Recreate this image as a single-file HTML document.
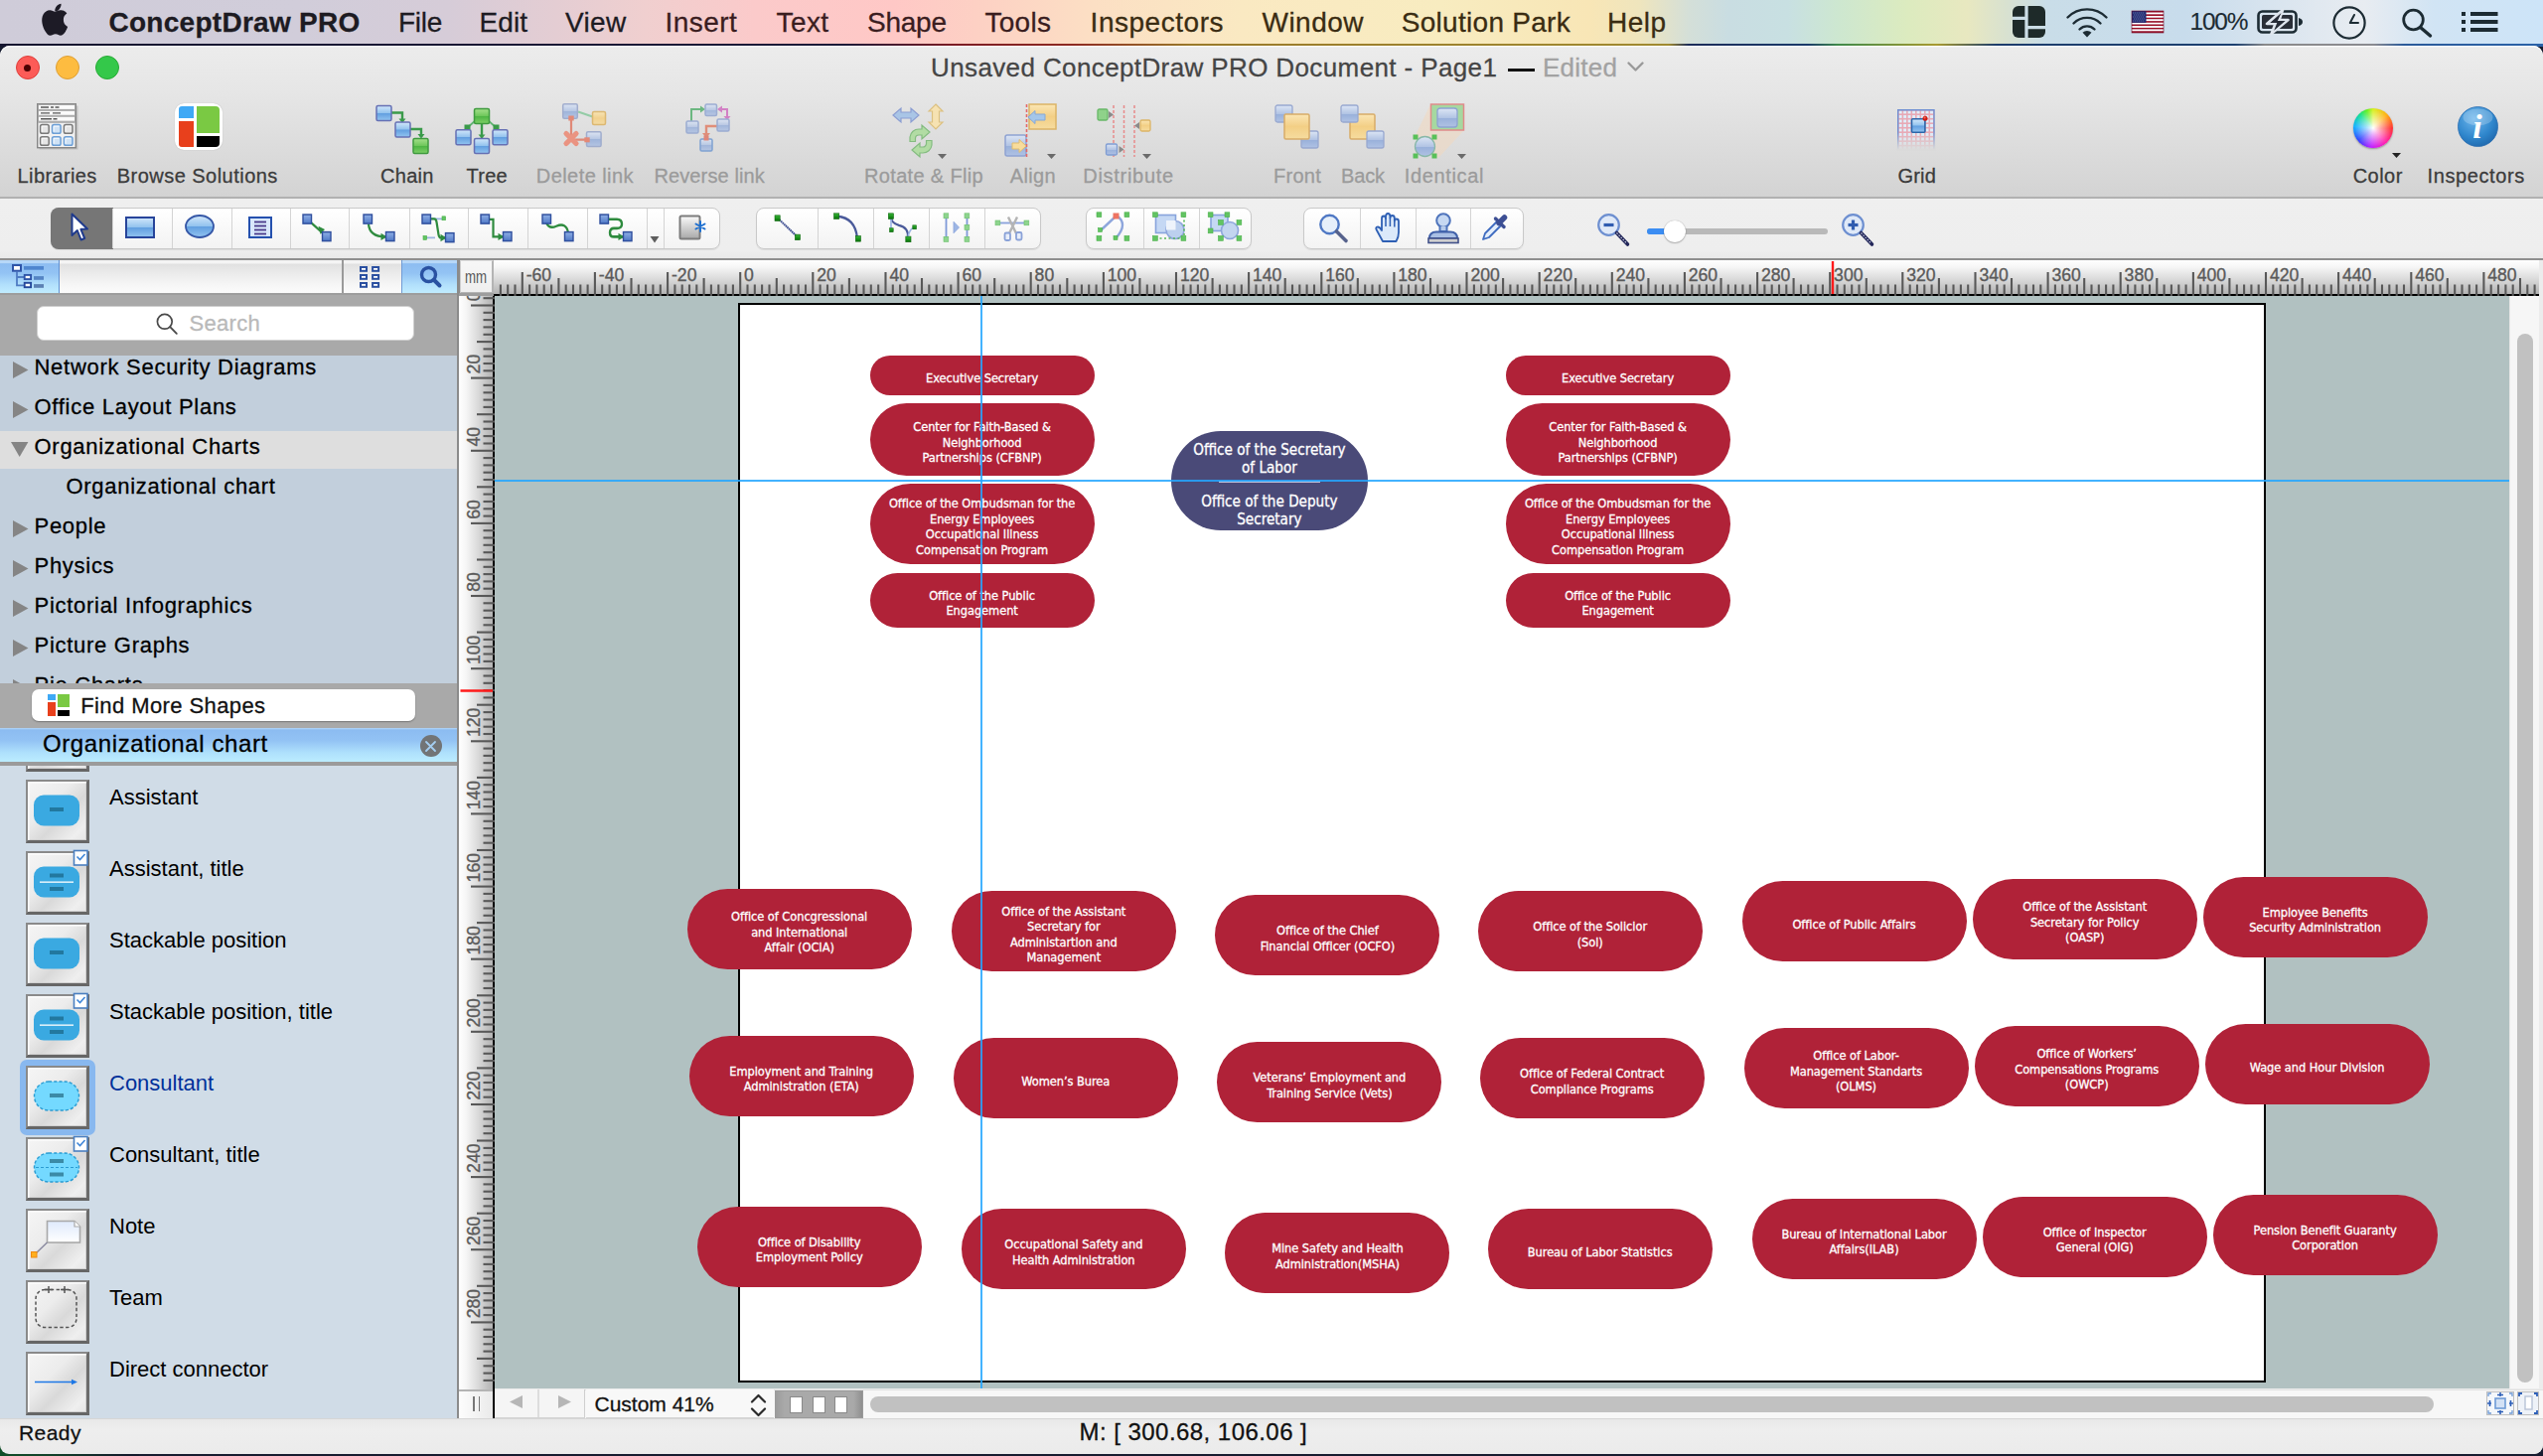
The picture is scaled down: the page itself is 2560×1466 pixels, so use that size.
<!DOCTYPE html>
<html lang="en"><head><meta charset="utf-8"><title>ConceptDraw PRO</title>
<style>
html,body{margin:0;padding:0}
body{width:2560px;height:1466px;overflow:hidden;background:#171c30;font-family:"Liberation Sans",sans-serif;position:relative}
.t{position:absolute;white-space:nowrap}
div{box-sizing:border-box}
svg{position:absolute;overflow:visible}
#win{position:absolute;left:0;top:46px;width:2560px;height:1417.700px;border-radius:10px 10px 9px 9px;overflow:hidden;background:#ececec}
.seg{position:absolute;top:209px;height:42px;border-radius:8px;background:linear-gradient(#ffffff,#f3f3f3);border:1px solid #c9c9c9;box-shadow:0 1px 1px rgba(0,0,0,.08)}
.seg i{position:absolute;top:0;bottom:0;width:1px;background:#d4d4d4}
.ib{position:absolute;left:26px;width:64px;height:64px;border:2.500px solid #8a8a8a;border-right:3px solid #6c6c6c;border-bottom:3px solid #666;background:linear-gradient(135deg,#f5f5f5 0%,#ececec 38%,#d9d9d9 60%,#efefef 86%,#e6e6e6 100%);box-shadow:inset 1.500px 1.500px 0 #fdfdfd,inset -1px -1px 0 #cfcfcf}
.sh{position:absolute;background:#b02238;color:#fff;display:flex;align-items:center;justify-content:center;text-align:center;font-family:"DejaVu Sans Condensed","DejaVu Sans",sans-serif;font-size:12.7px;line-height:15.5px;letter-spacing:-0.05px;width:226px;-webkit-text-stroke:.3px #fff;padding-top:5.500px}
</style></head>
<body>
<div style="position:absolute;left:0px;top:0px;width:2560px;height:44px;background:linear-gradient(90deg,#cfccd9 0px,#d1cdda 300px,#d6ccd8 450px,#e4cdd3 560px,#f0cfcf 650px,#fbcaca 760px,#ffc8c6 900px,#fdd0c4 980px,#fcdfc4 1100px,#fae9c2 1250px,#f8ecc0 1450px,#f8e6b6 1600px,#efe5bd 1650px,#d4dfd8 1700px,#c9dde2 1740px,#c8e0e2 1800px,#cde7d0 1850px,#dcebbf 1920px,#e8e8c0 1980px,#d8e1d0 2020px,#c9dde8 2060px,#c8dcec 2200px,#e0e8f0 2330px,#e8ecf1 2380px,#d1e4f4 2450px,#cde4f8 2560px);"></div>
<div style="position:absolute;left:0px;top:44px;width:2560px;height:3px;background:linear-gradient(90deg,#15152f 0px,#1b1a38 850px,#7c1c24 960px,#8e2a22 1080px,#9a7a2a 1200px,#a08a30 1680px,#1c2c5a 1700px,#1a3a6a 1820px,#3f8a4a 1850px,#a89a30 1950px,#1c3c6c 2010px,#1c4070 2250px,#8a8a8a 2280px,#8a8a90 2390px,#2a5a9a 2420px,#2a62a8 2560px);"></div>
<svg style="left:40.100px;top:.200px" width="29.500" height="36.600" viewBox="0 0 170 200" preserveAspectRatio="none"><path fill="#1d1b26" d="M150.4 172.3c-7.6 11.3-15.6 22.5-28.3 22.700-12.400.2-16.400-7.300-30.500-7.300-14.2 0-18.6 7.100-30.3 7.600-12.200.5-21.500-12.100-29.200-23.300C16.4 149.2 4.4 107.5 20.6 79.300c8-14 22.400-22.8 37.900-23.1 11.800-.2 23 8 30.3 8 7.2 0 20.800-9.9 35.100-8.4 6 .2 22.8 2.4 33.6 18.200-.9.600-20.1 11.700-19.8 35 .2 27.8 24.4 37.1 24.7 37.200-.2.600-3.9 13.200-12 25.100zM97.6 34.500C104.1 26.7 115 20.8 124 20.400c1.2 10.500-3.1 21.100-9.3 28.600-6.3 7.600-16.5 13.500-26.6 12.700-1.300-10.3 3.700-21 9.500-27.200z"/></svg>
<div class="t" style="left:109.5px;top:4.60px;font-size:28px;line-height:36.4px;color:#1d1b22;letter-spacing:0.271px;-webkit-text-stroke:0.28px #1d1b22;font-weight:bold;">ConceptDraw PRO</div>
<div class="t" style="left:401px;top:4.60px;font-size:28px;line-height:36.4px;color:#1d1b22;letter-spacing:-0.28px;-webkit-text-stroke:0.28px #1d1b22;">File</div>
<div class="t" style="left:482.6px;top:4.60px;font-size:28px;line-height:36.4px;color:#1d1b22;letter-spacing:0.038px;-webkit-text-stroke:0.28px #1d1b22;">Edit</div>
<div class="t" style="left:569px;top:4.60px;font-size:28px;line-height:36.4px;color:#1d1b22;letter-spacing:0.353px;-webkit-text-stroke:0.28px #1d1b22;">View</div>
<div class="t" style="left:669.4px;top:4.60px;font-size:28px;line-height:36.4px;color:#3a1d1f;letter-spacing:0.495px;-webkit-text-stroke:0.28px #3a1d1f;">Insert</div>
<div class="t" style="left:781.6px;top:4.60px;font-size:28px;line-height:36.4px;color:#3a1d1f;letter-spacing:0.362px;-webkit-text-stroke:0.28px #3a1d1f;">Text</div>
<div class="t" style="left:873px;top:4.60px;font-size:28px;line-height:36.4px;color:#3a1d1f;letter-spacing:-0.254px;-webkit-text-stroke:0.28px #3a1d1f;">Shape</div>
<div class="t" style="left:991.4px;top:4.60px;font-size:28px;line-height:36.4px;color:#3a1d1f;letter-spacing:0.327px;-webkit-text-stroke:0.28px #3a1d1f;">Tools</div>
<div class="t" style="left:1097.6px;top:4.60px;font-size:28px;line-height:36.4px;color:#3a2c12;letter-spacing:0.523px;-webkit-text-stroke:0.28px #3a2c12;">Inspectors</div>
<div class="t" style="left:1270.5px;top:4.60px;font-size:28px;line-height:36.4px;color:#3a2c12;letter-spacing:0.485px;-webkit-text-stroke:0.28px #3a2c12;">Window</div>
<div class="t" style="left:1410.8px;top:4.60px;font-size:28px;line-height:36.4px;color:#3a2c12;letter-spacing:0.281px;-webkit-text-stroke:0.28px #3a2c12;">Solution Park</div>
<div class="t" style="left:1618px;top:4.60px;font-size:28px;line-height:36.4px;color:#3a2c12;letter-spacing:0.503px;-webkit-text-stroke:0.28px #3a2c12;">Help</div>
<svg style="left:2025.500px;top:5.500px" width="33" height="32" viewBox="0 0 33 32"><rect x="0" y="0" width="33" height="32" rx="6" fill="#1e2a29"/><path d="M14 0V32M0 12.300H14M14 21.700H33" stroke="#cbdde6" stroke-width="3.300"/></svg>
<svg style="left:2079px;top:6px" width="44" height="32" viewBox="0 0 44 32"><g fill="none" stroke="#1c2b33" stroke-width="2.400" stroke-linecap="round"><path d="M2.5 11.5 A27.5 27.5 0 0 1 41.5 11.500"/><path d="M8.5 17.5 A19 19 0 0 1 35.5 17.500"/><path d="M14.5 23.5 A10.6 10.6 0 0 1 29.5 23.500"/></g><path fill="#1c2b33" d="M22 31.5 L17.5 26.8 A6.4 6.4 0 0 1 26.5 26.8 Z"/></svg>
<svg style="left:2146px;top:11px" width="32" height="22" viewBox="0 0 32 22"><rect x="0" y="0.00" width="32" height="1.69" fill="#9c0e24"/><rect x="0" y="1.69" width="32" height="1.69" fill="#fff"/><rect x="0" y="3.38" width="32" height="1.69" fill="#9c0e24"/><rect x="0" y="5.08" width="32" height="1.69" fill="#fff"/><rect x="0" y="6.77" width="32" height="1.69" fill="#9c0e24"/><rect x="0" y="8.46" width="32" height="1.69" fill="#fff"/><rect x="0" y="10.15" width="32" height="1.69" fill="#9c0e24"/><rect x="0" y="11.85" width="32" height="1.69" fill="#fff"/><rect x="0" y="13.54" width="32" height="1.69" fill="#9c0e24"/><rect x="0" y="15.23" width="32" height="1.69" fill="#fff"/><rect x="0" y="16.92" width="32" height="1.69" fill="#9c0e24"/><rect x="0" y="18.62" width="32" height="1.69" fill="#fff"/><rect x="0" y="20.31" width="32" height="1.69" fill="#9c0e24"/><rect x="0" y="0" width="14.500" height="11.850" fill="#1f2a72"/><path d="M1.500 2H13.500M2.500 4H13M1.500 6H13.500M2.500 8H13M1.500 10H13.500" stroke="#e8eaf8" stroke-width=".700" stroke-dasharray=".700 1.300"/><rect x="0" y="0" width="32" height="22" fill="none" stroke="#701028" stroke-width="0.6"/></svg>
<div class="t" style="left:2204.5px;top:6.29px;font-size:24.4px;line-height:31.72px;color:#1c2b33;letter-spacing:-1.152px;-webkit-text-stroke:0.15px #1c2b33;">100%</div>
<svg style="left:2272px;top:10px" width="47" height="24" viewBox="0 0 47 24"><rect x="1.500" y="1.500" width="38" height="21" rx="4" fill="none" stroke="#1c2b33" stroke-width="2.600"/><rect x="5" y="5" width="31" height="14" rx="1.500" fill="#2a2f38"/><path d="M42 8 q4 1 4 4 q0 3 -4 4 z" fill="#1c2b33"/><path d="M26 0 L10 14 H18.500 L14.500 24 L31.500 10 H22.500 Z" fill="#dfe6ee" stroke="#dfe6ee" stroke-width="2.600" stroke-linejoin="round"/><path d="M24.500 3 L13.200 13 H20.300 L17.200 20.800 L28.600 11 H20.800 Z" fill="#262b36"/></svg>
<svg style="left:2348px;top:6px" width="34" height="34" viewBox="0 0 34 34"><circle cx="17" cy="17" r="15.600" fill="none" stroke="#1c2b33" stroke-width="2.200"/><path d="M22 9 L17.8 17 H26" fill="none" stroke="#1c2b33" stroke-width="2" stroke-linejoin="round" stroke-linecap="round"/></svg>
<svg style="left:2417px;top:8px" width="32" height="30" viewBox="0 0 32 30"><circle cx="12.500" cy="12" r="9.800" fill="none" stroke="#1c2b33" stroke-width="2.800"/><path d="M19.5 19.5 L29.5 28" stroke="#1c2b33" stroke-width="3.400" stroke-linecap="round"/></svg>
<svg style="left:2477.500px;top:12px" width="37" height="20" viewBox="0 0 37 20"><rect x="0" y="0" width="4" height="4" fill="#1c2b33"/><rect x="9" y="0" width="27.500" height="4" fill="#1c2b33"/><rect x="0" y="8" width="4" height="4" fill="#1c2b33"/><rect x="9" y="8" width="27.500" height="4" fill="#1c2b33"/><rect x="0" y="16" width="4" height="4" fill="#1c2b33"/><rect x="9" y="16" width="27.500" height="4" fill="#1c2b33"/></svg>
<div id="win"></div>
<div style="position:absolute;left:0px;top:46px;width:2560px;height:153px;background:linear-gradient(#ececec 0%,#e6e6e6 30%,#d3d3d3 100%);border-radius:10px 10px 0 0;box-shadow:inset 0 1.200px 0 rgba(255,255,255,.85);"></div>
<div style="position:absolute;left:0px;top:198px;width:2560px;height:2px;background:#b1b1b1;"></div>
<div style="position:absolute;left:15.7px;top:56px;width:24px;height:24px;border-radius:50%;background:#fc5b57;border:1px solid #df3e3a;"></div>
<div style="position:absolute;left:56px;top:56px;width:24px;height:24px;border-radius:50%;background:#fdbc40;border:1px solid #de9f34;"></div>
<div style="position:absolute;left:95.7px;top:56px;width:24px;height:24px;border-radius:50%;background:#34c84a;border:1px solid #27aa35;"></div>
<div style="position:absolute;left:24.2px;top:64.5px;width:7px;height:7px;border-radius:50%;background:#4c0102;"></div>
<div class="t" style="left:937px;top:52.49px;font-size:26px;line-height:33.8px;color:#454545;letter-spacing:0.384px;-webkit-text-stroke:0.28px #454545;">Unsaved ConceptDraw PRO Document - Page1</div>
<div style="position:absolute;left:1518px;top:69.3px;width:27px;height:2.6px;background:#111;"></div>
<div class="t" style="left:1553px;top:52.49px;font-size:26px;line-height:33.8px;color:#a2a2a2;letter-spacing:0.263px;-webkit-text-stroke:0.28px #a2a2a2;">Edited</div>
<svg style="left:1638px;top:62px" width="17" height="11" viewBox="0 0 17 11"><path d="M1.500 1.500 L8.500 8.500 L15.500 1.500" fill="none" stroke="#9a9a9a" stroke-width="2.400" stroke-linecap="round" stroke-linejoin="round"/></svg>
<div class="t" style="left:17.6px;top:164.07px;font-size:20px;line-height:26.0px;color:#3b3b3b;letter-spacing:0.366px;-webkit-text-stroke:0.28px #3b3b3b;">Libraries</div>
<div class="t" style="left:117.8px;top:164.07px;font-size:20px;line-height:26.0px;color:#3b3b3b;letter-spacing:0.467px;-webkit-text-stroke:0.28px #3b3b3b;">Browse Solutions</div>
<div class="t" style="left:383px;top:164.07px;font-size:20px;line-height:26.0px;color:#3b3b3b;letter-spacing:0.288px;-webkit-text-stroke:0.28px #3b3b3b;">Chain</div>
<div class="t" style="left:469.4px;top:164.07px;font-size:20px;line-height:26.0px;color:#3b3b3b;letter-spacing:0.304px;-webkit-text-stroke:0.28px #3b3b3b;">Tree</div>
<div class="t" style="left:539.8px;top:164.07px;font-size:20px;line-height:26.0px;color:#9b9b9b;letter-spacing:0.438px;-webkit-text-stroke:0.28px #9b9b9b;">Delete link</div>
<div class="t" style="left:658.4px;top:164.07px;font-size:20px;line-height:26.0px;color:#9b9b9b;letter-spacing:0.13px;-webkit-text-stroke:0.28px #9b9b9b;">Reverse link</div>
<div class="t" style="left:870px;top:164.07px;font-size:20px;line-height:26.0px;color:#9b9b9b;letter-spacing:0.338px;-webkit-text-stroke:0.28px #9b9b9b;">Rotate &amp; Flip</div>
<div class="t" style="left:1016.7px;top:164.07px;font-size:20px;line-height:26.0px;color:#9b9b9b;letter-spacing:0.365px;-webkit-text-stroke:0.28px #9b9b9b;">Align</div>
<div class="t" style="left:1090.3px;top:164.07px;font-size:20px;line-height:26.0px;color:#9b9b9b;letter-spacing:0.703px;-webkit-text-stroke:0.28px #9b9b9b;">Distribute</div>
<div class="t" style="left:1282px;top:164.07px;font-size:20px;line-height:26.0px;color:#9b9b9b;letter-spacing:0.264px;-webkit-text-stroke:0.28px #9b9b9b;">Front</div>
<div class="t" style="left:1350px;top:164.07px;font-size:20px;line-height:26.0px;color:#9b9b9b;letter-spacing:-0.116px;-webkit-text-stroke:0.28px #9b9b9b;">Back</div>
<div class="t" style="left:1413.8px;top:164.07px;font-size:20px;line-height:26.0px;color:#9b9b9b;letter-spacing:0.634px;-webkit-text-stroke:0.28px #9b9b9b;">Identical</div>
<div class="t" style="left:1910.4px;top:164.07px;font-size:20px;line-height:26.0px;color:#3b3b3b;letter-spacing:0.204px;-webkit-text-stroke:0.28px #3b3b3b;">Grid</div>
<div class="t" style="left:2368.7px;top:164.07px;font-size:20px;line-height:26.0px;color:#3b3b3b;letter-spacing:0.461px;-webkit-text-stroke:0.28px #3b3b3b;">Color</div>
<div class="t" style="left:2443.5px;top:164.07px;font-size:20px;line-height:26.0px;color:#3b3b3b;letter-spacing:0.603px;-webkit-text-stroke:0.28px #3b3b3b;">Inspectors</div>
<svg width="0" height="0" style="left:0;top:0"><defs>
<linearGradient id="gB" x1="0" y1="0" x2="0" y2="1"><stop offset="0" stop-color="#d3e8fb"/><stop offset=".48" stop-color="#93c3ee"/><stop offset=".52" stop-color="#629fe0"/><stop offset="1" stop-color="#93c4f0"/></linearGradient>
<linearGradient id="gG" x1="0" y1="0" x2="0" y2="1"><stop offset="0" stop-color="#a6e08c"/><stop offset=".5" stop-color="#6cc659"/><stop offset=".52" stop-color="#4db543"/><stop offset="1" stop-color="#7fd068"/></linearGradient>
<linearGradient id="gY" x1="0" y1="0" x2="0" y2="1"><stop offset="0" stop-color="#fbe6b4"/><stop offset=".5" stop-color="#f3cf85"/><stop offset="1" stop-color="#f6dc9f"/></linearGradient>
<linearGradient id="gS" x1="0" y1="0" x2="0" y2="1"><stop offset="0" stop-color="#dde6f5"/><stop offset=".5" stop-color="#b2c4e4"/><stop offset=".52" stop-color="#98b0da"/><stop offset="1" stop-color="#b0c2e4"/></linearGradient>
<radialGradient id="gInfo" cx=".4" cy=".3" r=".8"><stop offset="0" stop-color="#6db6ec"/><stop offset=".6" stop-color="#2f86cc"/><stop offset="1" stop-color="#1c62a6"/></radialGradient>
</defs></svg>
<svg style="left:37.300px;top:104.400px" width="42" height="47" viewBox="0 0 42 47"><rect x="2.500" y="2.500" width="39" height="44" fill="#8a8a8a" opacity=".35"/><rect x=".700" y=".700" width="38.600" height="44" fill="#f1f1f1" stroke="#868686" stroke-width="1.400"/><rect x="1.400" y="1.4" width="37.200" height="5" fill="#fbfbfb" stroke="#a2a2a2" stroke-width="1"/><path d="M4 4.0h8m2 0h3m1.500 0h4" stroke="#555" stroke-width="1.400"/><rect x="1.400" y="7.3" width="37.200" height="5" fill="#fbfbfb" stroke="#a2a2a2" stroke-width="1"/><path d="M4 9.9h9m3 0h8" stroke="#555" stroke-width="1.400"/><rect x="1.400" y="13.2" width="37.200" height="5" fill="#fbfbfb" stroke="#a2a2a2" stroke-width="1"/><path d="M4 15.799999999999999h11m1.500 0h4" stroke="#555" stroke-width="1.400"/><path d="M1.400 19.200H38.600" stroke="#9a9a9a" stroke-width="1"/><rect x="3.6" y="21.6" width="8.600" height="8.600" rx="1.800" fill="#e6e6e6" stroke="#7a7a7a" stroke-width="1.500"/><path d="M5.2 28.6v-5.400h5.400" fill="none" stroke="#fff" stroke-width="1" opacity=".8"/><rect x="15.5" y="21.6" width="8.600" height="8.600" rx="1.800" fill="#cfe2f5" stroke="#6c9fd6" stroke-width="1.500"/><path d="M17.1 28.6v-5.400h5.400" fill="none" stroke="#fff" stroke-width="1" opacity=".8"/><rect x="27.4" y="21.6" width="8.600" height="8.600" rx="1.800" fill="#e6e6e6" stroke="#7a7a7a" stroke-width="1.500"/><path d="M29.0 28.6v-5.400h5.400" fill="none" stroke="#fff" stroke-width="1" opacity=".8"/><rect x="3.6" y="33.7" width="8.600" height="8.600" rx="1.800" fill="#e6e6e6" stroke="#7a7a7a" stroke-width="1.500"/><path d="M5.2 40.7v-5.400h5.400" fill="none" stroke="#fff" stroke-width="1" opacity=".8"/><rect x="15.5" y="33.7" width="8.600" height="8.600" rx="1.800" fill="#cfe2f5" stroke="#6c9fd6" stroke-width="1.500"/><path d="M17.1 40.7v-5.400h5.400" fill="none" stroke="#fff" stroke-width="1" opacity=".8"/><rect x="27.4" y="33.7" width="8.600" height="8.600" rx="1.800" fill="#cfe2f5" stroke="#6c9fd6" stroke-width="1.500"/><path d="M29.0 40.7v-5.400h5.400" fill="none" stroke="#fff" stroke-width="1" opacity=".8"/></svg>
<div style="position:absolute;left:176px;top:104px;width:48px;height:47px;background:#fff;border-radius:9px;box-shadow:0 0 1px rgba(0,0,0,.25);"></div>
<div style="position:absolute;left:179.5px;top:107.2px;width:15px;height:11.4px;background:#3fa9f5;border-radius:3px 0 0 0;"></div>
<div style="position:absolute;left:179.5px;top:121.8px;width:15px;height:26px;background:#e8401c;border-radius:0 0 0 3px;"></div>
<div style="position:absolute;left:197.8px;top:107.2px;width:23px;height:26.8px;background:#7ac943;border-radius:0 4px 0 0;"></div>
<div style="position:absolute;left:197.8px;top:137px;width:23px;height:10.8px;background:#000;border-radius:0 0 4px 0;"></div>
<svg style="left:378px;top:105px" width="55" height="51" viewBox="0 0 55 51"><path d="M16 8.500 H27 V17 M35 25 H46 V33" fill="none" stroke="#3a9a4a" stroke-width="2.400"/><path d="M23.500 14.500h7l-3.500 4.500z M42.500 30h7l-3.500 4.500z" fill="#3a9a4a"/><rect x="1" y="1.5" width="15" height="15" rx="1.5" fill="url(#gB)" stroke="#6670b4" stroke-width="1.5"/><rect x="20" y="18" width="15" height="15" rx="1.5" fill="url(#gB)" stroke="#6670b4" stroke-width="1.5"/><rect x="38" y="34.5" width="15" height="15" rx="1.5" fill="url(#gG)" stroke="#3f9a3f" stroke-width="1.5"/></svg>
<svg style="left:458px;top:108px" width="55" height="48" viewBox="0 0 55 48"><path d="M27 16 V32" fill="none" stroke="#3a9a4a" stroke-width="2.400"/><path d="M21 13 L12 21 M33 13 L42 21" fill="none" stroke="#62b474" stroke-width="1.800"/><path d="M23.500 27.500h7l-3.500 4z" fill="#3a9a4a"/><rect x="9.500" y="17.500" width="6" height="5" fill="#3a9a4a"/><rect x="38.500" y="17.500" width="6" height="5" fill="#3a9a4a"/><rect x="19.5" y="1.5" width="15" height="15" rx="1.5" fill="url(#gG)" stroke="#3f9a3f" stroke-width="1.5"/><rect x="1" y="22.7" width="15" height="15" rx="1.5" fill="url(#gB)" stroke="#6670b4" stroke-width="1.5"/><rect x="19.5" y="31.5" width="15" height="15" rx="1.5" fill="url(#gB)" stroke="#6670b4" stroke-width="1.5"/><rect x="38" y="22.7" width="15" height="15" rx="1.5" fill="url(#gB)" stroke="#6670b4" stroke-width="1.5"/></svg>
<svg style="left:566px;top:104px;opacity:.9" width="46" height="50" viewBox="0 0 46 50"><path d="M16 8.500 L30.500 13.500" stroke="#8ccaa0" stroke-width="2"/><path d="M9 15 V33 M11 36.700 H27" fill="none" stroke="#e0806c" stroke-width="2.200"/><path d="M4 30.500 L14 40.500 M14 30.500 L4 40.500" stroke="#ec8c78" stroke-width="5.200" stroke-linecap="round"/><rect x="0.7" y="0.7" width="14.6" height="14.6" rx="1.5" fill="url(#gS)" stroke="#9aa8cc" stroke-width="1.5"/><rect x="30.5" y="8.5" width="13" height="13" rx="1.5" fill="url(#gY)" stroke="#dcb466" stroke-width="1.5"/><rect x="24.5" y="28.8" width="14.6" height="14.6" rx="1.5" fill="url(#gS)" stroke="#9aa8cc" stroke-width="1.5"/><rect x="6.300" y="12.500" width="5.400" height="5" fill="#e4806c"/><rect x="22.300" y="34.300" width="5.400" height="5" fill="#e4806c"/></svg>
<svg style="left:690px;top:104px;opacity:.85" width="46" height="50" viewBox="0 0 46 50"><path d="M6 18 V6 H17" fill="none" stroke="#58b070" stroke-width="2"/><path d="M15 2.500 L20 6 L15 9.500Z" fill="#58b070"/><path d="M36 6 H42 V14" fill="none" stroke="#d070c0" stroke-width="2"/><path d="M32 6 L37 2.500 V9.500Z M38.500 13 h7 l-3.500 4Z" fill="#d070c0"/><path d="M33 23 H21 V35" fill="none" stroke="#e08068" stroke-width="2.400"/><path d="M17 30 h8 l-4 5Z" fill="#e08068"/><rect x="20" y="1" width="11.5" height="11.5" rx="1.5" fill="url(#gS)" stroke="#90a4d0" stroke-width="1.5"/><rect x="1" y="18" width="12" height="12" rx="1.5" fill="url(#gS)" stroke="#90a4d0" stroke-width="1.5"/><rect x="32" y="16" width="12" height="12" rx="1.5" fill="url(#gS)" stroke="#90a4d0" stroke-width="1.5"/><rect x="15" y="36" width="12" height="12" rx="1.5" fill="url(#gS)" stroke="#6f98d0" stroke-width="1.5"/><rect x="18.500" y="32.500" width="5" height="5" fill="#e07868"/></svg>
<svg style="left:898px;top:104px" width="53" height="56" viewBox="0 0 53 56"><path d="M1 12 L9 5 V9 H19 V5 L27 12 L19 19 V15 H9 V19Z" fill="#a9c5e6" stroke="#8c9ed2" stroke-width="1.200"/><path d="M44 1 L51 8 H47.500 V19 H51 L44 26 L37 19 H40.500 V8 H37Z" fill="#f6e2b2" stroke="#dcc080" stroke-width="1.200"/><path d="M18 34 a9 9 0 0 1 9 -8 h3 v-4 l8 7 -8 7 v-4 h-3 a3.500 3.500 0 0 0 -3.500 3.500 v3 h-5.500z M40 42 a9 9 0 0 1 -9 8 h-3 v4 l-8 -7 8 -7 v4 h3 a3.500 3.500 0 0 0 3.500 -3.500 v-3 h5.500z" fill="#b2dca4" stroke="#84bc80" stroke-width="1.200"/></svg>
<svg style="left:943.5px;top:155px" width="9" height="5" viewBox="0 0 9 5"><path d="M0 0H9L4.500 5Z" fill="#6a6a6a"/></svg>
<svg style="left:1011px;top:104px" width="54" height="55" viewBox="0 0 54 55"><rect x="25" y="1" width="27" height="25" fill="url(#gY)" stroke="#dcb466" stroke-width="1.500"/><rect x="1" y="32" width="21" height="21" rx="2" fill="url(#gS)" stroke="#8ea2d2" stroke-width="1.500"/><path d="M22.500 1 V54" stroke="#e46a6a" stroke-width="1.600" stroke-dasharray="3 2"/><path d="M24 14 L31 7.500 V11 H41 V17 H31 V20.500Z" fill="#a4c6ea" stroke="#86a8d6" stroke-width="1"/><path d="M22 43 L15 36.500 V40 H8 V46 H15 V49.500Z" fill="#f8dc9c" stroke="#e0bc70" stroke-width="1"/></svg>
<svg style="left:1053.5px;top:155px" width="9" height="5" viewBox="0 0 9 5"><path d="M0 0H9L4.500 5Z" fill="#6a6a6a"/></svg>
<svg style="left:1104px;top:104px" width="56" height="55" viewBox="0 0 56 55"><path d="M17 2 V54 M27.500 2 V54 M38 2 V54" stroke="#e88a8a" stroke-width="1.500" stroke-dasharray="3 2"/><rect x="1" y="6" width="10" height="11" rx="1.500" fill="#8fd28a" stroke="#68b868" stroke-width="1.300"/><path d="M12 8 l5 3.500 -5 3.500Z" fill="#8a8a8a"/><rect x="44" y="17" width="10" height="11" rx="1.500" fill="url(#gY)" stroke="#dcb466" stroke-width="1.300"/><path d="M43 19 l-5 3.500 5 3.500Z" fill="#8a8a8a"/><rect x="9.500" y="41" width="11" height="11" rx="1.500" fill="url(#gS)" stroke="#7f9cd2" stroke-width="1.300"/><path d="M22.500 43 l5 3.500 -5 3.500Z" fill="#8a8a8a"/></svg>
<svg style="left:1149.5px;top:155px" width="9" height="5" viewBox="0 0 9 5"><path d="M0 0H9L4.500 5Z" fill="#6a6a6a"/></svg>
<svg style="left:1283px;top:105px" width="46" height="46" viewBox="0 0 46 46"><rect x="1" y="1" width="17" height="17" rx="2" fill="url(#gS)" stroke="#98a8d0" stroke-width="1.3"/><rect x="27" y="27" width="17" height="17" rx="2" fill="url(#gS)" stroke="#98a8d0" stroke-width="1.3"/><rect x="10" y="10" width="25" height="25" rx="1.500" fill="url(#gY)" stroke="#d8ac68" stroke-width="1.500"/></svg>
<svg style="left:1349px;top:105px" width="46" height="46" viewBox="0 0 46 46"><rect x="10" y="10" width="25" height="25" rx="1.500" fill="url(#gY)" stroke="#d8ac68" stroke-width="1.500"/><rect x="1" y="1" width="17" height="17" rx="2" fill="url(#gS)" stroke="#98a8d0" stroke-width="1.3"/><rect x="27" y="27" width="17" height="17" rx="2" fill="url(#gS)" stroke="#98a8d0" stroke-width="1.3"/></svg>
<svg style="left:1422px;top:104px" width="54" height="57" viewBox="0 0 54 57"><path d="M3 32 L18 1 H52 V27 L26 55 Z" fill="#f6d8b8" opacity=".45"/><rect x="18.500" y="1" width="33" height="26" fill="#a6d8a0" stroke="#e08a8a" stroke-width="1.500"/><rect x="25" y="5" width="20" height="19" rx="3" fill="url(#gS)" stroke="#8ea2d2" stroke-width="1.300"/><circle cx="12.500" cy="43.500" r="10" fill="url(#gS)" stroke="#88b8a8" stroke-width="1.300"/><rect x="0.5" y="31.5" width="5" height="5" fill="#58c058"/><rect x="19.5" y="31.5" width="5" height="5" fill="#58c058"/><rect x="0.5" y="50.5" width="5" height="5" fill="#58c058"/><rect x="19.5" y="50.5" width="5" height="5" fill="#58c058"/></svg>
<svg style="left:1467px;top:155px" width="9" height="5" viewBox="0 0 9 5"><path d="M0 0H9L4.500 5Z" fill="#6a6a6a"/></svg>
<svg style="left:1910.400px;top:110px" width="38" height="42" viewBox="0 0 38 42"><defs><linearGradient id="gfade" x1="0" y1="0" x2="0" y2="1"><stop offset="0" stop-color="#dcdcdc" stop-opacity="0"/><stop offset=".55" stop-color="#dcdcdc" stop-opacity="0"/><stop offset=".97" stop-color="#dadada" stop-opacity="1"/></linearGradient></defs><rect x=".500" y=".500" width="36.700" height="40.500" fill="#e8a9b5"/><rect x="1.70" y="1.50" width="2.900" height="2.900" fill="#dfeefa"/><rect x="6.18" y="1.50" width="2.900" height="2.900" fill="#dfeefa"/><rect x="10.66" y="1.50" width="2.900" height="2.900" fill="#dfeefa"/><rect x="15.14" y="1.50" width="2.900" height="2.900" fill="#dfeefa"/><rect x="19.62" y="1.50" width="2.900" height="2.900" fill="#dfeefa"/><rect x="24.10" y="1.50" width="2.900" height="2.900" fill="#dfeefa"/><rect x="28.58" y="1.50" width="2.900" height="2.900" fill="#dfeefa"/><rect x="33.06" y="1.50" width="2.900" height="2.900" fill="#dfeefa"/><rect x="1.70" y="6.00" width="2.900" height="2.900" fill="#dfeefa"/><rect x="6.18" y="6.00" width="2.900" height="2.900" fill="#dfeefa"/><rect x="10.66" y="6.00" width="2.900" height="2.900" fill="#dfeefa"/><rect x="15.14" y="6.00" width="2.900" height="2.900" fill="#dfeefa"/><rect x="19.62" y="6.00" width="2.900" height="2.900" fill="#dfeefa"/><rect x="24.10" y="6.00" width="2.900" height="2.900" fill="#dfeefa"/><rect x="28.58" y="6.00" width="2.900" height="2.900" fill="#dfeefa"/><rect x="33.06" y="6.00" width="2.900" height="2.900" fill="#dfeefa"/><rect x="1.70" y="10.50" width="2.900" height="2.900" fill="#dfeefa"/><rect x="6.18" y="10.50" width="2.900" height="2.900" fill="#dfeefa"/><rect x="10.66" y="10.50" width="2.900" height="2.900" fill="#dfeefa"/><rect x="15.14" y="10.50" width="2.900" height="2.900" fill="#dfeefa"/><rect x="19.62" y="10.50" width="2.900" height="2.900" fill="#dfeefa"/><rect x="24.10" y="10.50" width="2.900" height="2.900" fill="#dfeefa"/><rect x="28.58" y="10.50" width="2.900" height="2.900" fill="#dfeefa"/><rect x="33.06" y="10.50" width="2.900" height="2.900" fill="#dfeefa"/><rect x="1.70" y="15.00" width="2.900" height="2.900" fill="#dfeefa"/><rect x="6.18" y="15.00" width="2.900" height="2.900" fill="#dfeefa"/><rect x="10.66" y="15.00" width="2.900" height="2.900" fill="#dfeefa"/><rect x="15.14" y="15.00" width="2.900" height="2.900" fill="#dfeefa"/><rect x="19.62" y="15.00" width="2.900" height="2.900" fill="#dfeefa"/><rect x="24.10" y="15.00" width="2.900" height="2.900" fill="#dfeefa"/><rect x="28.58" y="15.00" width="2.900" height="2.900" fill="#dfeefa"/><rect x="33.06" y="15.00" width="2.900" height="2.900" fill="#dfeefa"/><rect x="1.70" y="19.50" width="2.900" height="2.900" fill="#dfeefa"/><rect x="6.18" y="19.50" width="2.900" height="2.900" fill="#dfeefa"/><rect x="10.66" y="19.50" width="2.900" height="2.900" fill="#dfeefa"/><rect x="15.14" y="19.50" width="2.900" height="2.900" fill="#dfeefa"/><rect x="19.62" y="19.50" width="2.900" height="2.900" fill="#dfeefa"/><rect x="24.10" y="19.50" width="2.900" height="2.900" fill="#dfeefa"/><rect x="28.58" y="19.50" width="2.900" height="2.900" fill="#dfeefa"/><rect x="33.06" y="19.50" width="2.900" height="2.900" fill="#dfeefa"/><rect x="1.70" y="24.00" width="2.900" height="2.900" fill="#dfeefa"/><rect x="6.18" y="24.00" width="2.900" height="2.900" fill="#dfeefa"/><rect x="10.66" y="24.00" width="2.900" height="2.900" fill="#dfeefa"/><rect x="15.14" y="24.00" width="2.900" height="2.900" fill="#dfeefa"/><rect x="19.62" y="24.00" width="2.900" height="2.900" fill="#dfeefa"/><rect x="24.10" y="24.00" width="2.900" height="2.900" fill="#dfeefa"/><rect x="28.58" y="24.00" width="2.900" height="2.900" fill="#dfeefa"/><rect x="33.06" y="24.00" width="2.900" height="2.900" fill="#dfeefa"/><rect x="1.70" y="28.50" width="2.900" height="2.900" fill="#dfeefa"/><rect x="6.18" y="28.50" width="2.900" height="2.900" fill="#dfeefa"/><rect x="10.66" y="28.50" width="2.900" height="2.900" fill="#dfeefa"/><rect x="15.14" y="28.50" width="2.900" height="2.900" fill="#dfeefa"/><rect x="19.62" y="28.50" width="2.900" height="2.900" fill="#dfeefa"/><rect x="24.10" y="28.50" width="2.900" height="2.900" fill="#dfeefa"/><rect x="28.58" y="28.50" width="2.900" height="2.900" fill="#dfeefa"/><rect x="33.06" y="28.50" width="2.900" height="2.900" fill="#dfeefa"/><rect x="1.70" y="33.00" width="2.900" height="2.900" fill="#dfeefa"/><rect x="6.18" y="33.00" width="2.900" height="2.900" fill="#dfeefa"/><rect x="10.66" y="33.00" width="2.900" height="2.900" fill="#dfeefa"/><rect x="15.14" y="33.00" width="2.900" height="2.900" fill="#dfeefa"/><rect x="19.62" y="33.00" width="2.900" height="2.900" fill="#dfeefa"/><rect x="24.10" y="33.00" width="2.900" height="2.900" fill="#dfeefa"/><rect x="28.58" y="33.00" width="2.900" height="2.900" fill="#dfeefa"/><rect x="33.06" y="33.00" width="2.900" height="2.900" fill="#dfeefa"/><rect x="1.70" y="37.50" width="2.900" height="2.900" fill="#dfeefa"/><rect x="6.18" y="37.50" width="2.900" height="2.900" fill="#dfeefa"/><rect x="10.66" y="37.50" width="2.900" height="2.900" fill="#dfeefa"/><rect x="15.14" y="37.50" width="2.900" height="2.900" fill="#dfeefa"/><rect x="19.62" y="37.50" width="2.900" height="2.900" fill="#dfeefa"/><rect x="24.10" y="37.50" width="2.900" height="2.900" fill="#dfeefa"/><rect x="28.58" y="37.50" width="2.900" height="2.900" fill="#dfeefa"/><rect x="33.06" y="37.50" width="2.900" height="2.900" fill="#dfeefa"/><path d="M.700 41 V.700 H37 V41" fill="none" stroke="#6f8fd2" stroke-width="1.400"/><rect x="-1" y="0" width="40" height="42" fill="url(#gfade)"/><rect x="14.500" y="9.800" width="13.400" height="13.400" rx="1" fill="url(#gB)" stroke="#2c66aa" stroke-width="1.600"/><circle cx="28" cy="9.200" r="2.500" fill="#d21a12"/><circle cx="27.600" cy="8.600" r="1" fill="#f0705c"/></svg>
<div style="position:absolute;left:2368.7px;top:109px;width:40.3px;height:40.3px;border-radius:50%;background:radial-gradient(circle,#fff 0%,rgba(255,255,255,.6) 25%,rgba(255,255,255,0) 68%),conic-gradient(from 0deg,#d8f020,#ffb010 45deg,#ff3030 90deg,#ff20b0 140deg,#c020ff 185deg,#3040ff 230deg,#10b0ff 275deg,#10e090 315deg,#60f020 340deg,#d8f020 360deg);box-shadow:0 1px 2px rgba(0,0,0,.35);"></div>
<svg style="left:2407.5px;top:154px" width="9" height="5" viewBox="0 0 9 5"><path d="M0 0H9L4.500 5Z" fill="#222"/></svg>
<svg style="left:2474px;top:107px" width="41" height="41" viewBox="0 0 41 41"><circle cx="20.500" cy="20.500" r="20" fill="url(#gInfo)" stroke="#2a6cb0" stroke-width=".8"/><ellipse cx="20.500" cy="11" rx="15" ry="8.500" fill="#fff" opacity=".22"/><text x="20" y="32" font-family="Liberation Serif, serif" font-style="italic" font-weight="bold" font-size="34" fill="#fff" text-anchor="middle">i</text></svg>
<div style="position:absolute;left:0px;top:200px;width:2560px;height:60px;background:linear-gradient(#efefef,#eeeeee 88%,#e9e9e9);"></div>
<div style="position:absolute;left:0px;top:260px;width:2560px;height:2px;background:#8f8f8f;"></div>
<div class="seg" style="left:51px;width:673.5px"><b style="position:absolute;left:-1px;top:-1px;bottom:-1px;width:63.0px;background:#767676;border-radius:8px 0 0 8px"></b><i style="left:61.0px"></i><i style="left:121.0px"></i><i style="left:180.8px"></i><i style="left:239.5px"></i><i style="left:299.0px"></i><i style="left:359.5px"></i><i style="left:419.0px"></i><i style="left:479.0px"></i><i style="left:539.3px"></i><i style="left:598.6px"></i><i style="left:615.5px"></i></div>
<div class="seg" style="left:761.4px;width:286.9px"><i style="left:60.6px"></i><i style="left:116.8px"></i><i style="left:172.6px"></i><i style="left:228.2px"></i></div>
<div class="seg" style="left:1093.2px;width:167.1px"><i style="left:56.6px"></i><i style="left:112.6px"></i></div>
<div class="seg" style="left:1311.8px;width:222.7px"><i style="left:56.0px"></i><i style="left:112.2px"></i><i style="left:167.7px"></i></div>
<svg width="0" height="0" style="left:0;top:0"><defs><linearGradient id="gDG" x1="0" y1="0" x2="0" y2="1"><stop offset="0" stop-color="#3cb43c"/><stop offset=".5" stop-color="#1c961c"/><stop offset="1" stop-color="#0b6e0b"/></linearGradient><linearGradient id="gHB" x1="0" y1="0" x2="0" y2="1"><stop offset="0" stop-color="#8fb0e6"/><stop offset="1" stop-color="#4f78c6"/></linearGradient></defs></svg>
<svg style="left:71.0px;top:213.5px" width="18" height="30" viewBox="0 0 18 30"><path d="M1.500 1.500 V23 L6.800 18 L10.600 27.500 L14.200 26 L10.400 16.800 L17 16.500 Z" fill="#fff" stroke="#1f3a8c" stroke-width="2" stroke-linejoin="round"/></svg>
<svg style="left:126.0px;top:218.0px" width="30" height="22" viewBox="0 0 30 22"><rect x="1" y="1" width="28" height="20" fill="url(#gB)" stroke="#27449a" stroke-width="2"/></svg>
<svg style="left:186.0px;top:216.0px" width="30" height="24" viewBox="0 0 30 24"><ellipse cx="15" cy="12" rx="14" ry="11" fill="url(#gB)" stroke="#3456a6" stroke-width="1.800"/></svg>
<svg style="left:250.0px;top:218.0px" width="24" height="22" viewBox="0 0 24 22"><rect x="1" y="1" width="22" height="20" fill="#d9e8fb" stroke="#2450ae" stroke-width="2"/><rect x="6" y="4.6" width="12" height="1.800" fill="#4a3a8a"/><rect x="6" y="8.6" width="12" height="1.800" fill="#4a3a8a"/><rect x="6" y="12.6" width="12" height="1.800" fill="#4a3a8a"/><rect x="6" y="16.6" width="12" height="1.800" fill="#4a3a8a"/></svg>
<svg style="left:304.0px;top:214.7px" width="30" height="28.7" viewBox="0 0 30 27" preserveAspectRatio="none"><path d="M6 6 L25 22" stroke="#2e8b3e" stroke-width="2.200"/><path d="M16.500 12 l6.500 3 -4.500 4.500z" fill="#2e8b3e"/><rect x="1" y="1" width="8.5" height="8.5" fill="url(#gHB)" stroke="#2f4f9e" stroke-width="1.400"/><rect x="20.5" y="17.5" width="8.5" height="8.5" fill="url(#gHB)" stroke="#2f4f9e" stroke-width="1.400"/></svg>
<svg style="left:365.0px;top:215.2px" width="33" height="28.7" viewBox="0 0 33 27" preserveAspectRatio="none"><path d="M6 10 Q7 22 23 22" fill="none" stroke="#2e8b3e" stroke-width="2.200"/><path d="M18.500 18.500 l6 3.500 -6 3.500z" fill="#2e8b3e"/><rect x="1" y="1" width="8.5" height="8.5" fill="url(#gHB)" stroke="#2f4f9e" stroke-width="1.400"/><rect x="23.5" y="17.5" width="8.5" height="8.5" fill="url(#gHB)" stroke="#2f4f9e" stroke-width="1.400"/></svg>
<svg style="left:424.0px;top:215.2px" width="34" height="28.7" viewBox="0 0 34 27" preserveAspectRatio="none"><path d="M10 5 H22 M4 23 H14" stroke="#9ab4e0" stroke-width="1.600"/><path d="M10 5 H13 Q15 5 15.500 8 L17.500 20 Q18 23 20 23 H24" fill="none" stroke="#2e8b3e" stroke-width="2.200"/><path d="M19.500 19.500 l6 3.500 -6 3.500z" fill="#2e8b3e"/><rect x="21" y="2.7" width="3.6" height="3.6" fill="#62c462" stroke="#48b048" stroke-width=".600"/><rect x="2" y="21.2" width="3.6" height="3.6" fill="#62c462" stroke="#48b048" stroke-width=".600"/><rect x="1" y="1" width="8.5" height="8.5" fill="url(#gHB)" stroke="#2f4f9e" stroke-width="1.400"/><rect x="24.5" y="18.5" width="8.5" height="8.5" fill="url(#gHB)" stroke="#2f4f9e" stroke-width="1.400"/></svg>
<svg style="left:483.0px;top:214.7px" width="33" height="28.7" viewBox="0 0 33 27" preserveAspectRatio="none"><path d="M9 5.500 H13.500 V22 H23" fill="none" stroke="#2e8b3e" stroke-width="2.200"/><path d="M18.500 18.500 l6 3.500 -6 3.500z" fill="#2e8b3e"/><rect x="1" y="1" width="8.5" height="8.5" fill="url(#gHB)" stroke="#2f4f9e" stroke-width="1.400"/><rect x="23.5" y="17.5" width="8.5" height="8.5" fill="url(#gHB)" stroke="#2f4f9e" stroke-width="1.400"/></svg>
<svg style="left:544.5px;top:215.2px" width="33" height="28.7" viewBox="0 0 33 27" preserveAspectRatio="none"><path d="M5 9 Q8 15 15 12 Q25 8 27 18" fill="none" stroke="#2e8b3e" stroke-width="2.200"/><rect x="1" y="1" width="8.5" height="8.5" fill="url(#gHB)" stroke="#2f4f9e" stroke-width="1.400"/><rect x="23.5" y="17.5" width="8.5" height="8.5" fill="url(#gHB)" stroke="#2f4f9e" stroke-width="1.400"/></svg>
<svg style="left:603.0px;top:215.2px" width="34" height="28.7" viewBox="0 0 34 27" preserveAspectRatio="none"><path d="M9 5.500 H18 Q23 5.500 23 10 Q23 14 18 14 H15 Q11 14 11 18 Q11 22 15 22 H25" fill="none" stroke="#2e8b3e" stroke-width="2.400"/><path d="M19.500 18.500 l6 3.500 -6 3.500z" fill="#2e8b3e"/><rect x="1" y="1" width="8.5" height="8.5" fill="url(#gHB)" stroke="#2f4f9e" stroke-width="1.400"/><rect x="24.5" y="17.5" width="8.5" height="8.5" fill="url(#gHB)" stroke="#2f4f9e" stroke-width="1.400"/></svg>
<svg style="left:654px;top:237.500px" width="10" height="7" viewBox="0 0 10 7"><path d="M.500 0 H9.500 L5 6.500Z" fill="#5e5e5e"/></svg>
<svg style="left:682.5px;top:216.0px" width="28" height="26" viewBox="0 0 28 26"><defs><linearGradient id="gPg" x1="0" y1="0" x2="0" y2="1"><stop offset="0" stop-color="#fafafa"/><stop offset="1" stop-color="#a8a8a8"/></linearGradient></defs><rect x="1.500" y="1.500" width="20" height="23" rx="1.500" fill="url(#gPg)" stroke="#7c7c7c" stroke-width="2"/><path d="M22 7 V17 M17.500 9.500 L26.500 14.500 M26.500 9.500 L17.500 14.500" stroke="#1d6fd0" stroke-width="2" stroke-linecap="round"/></svg>
<svg style="left:778.5px;top:215.9px" width="28" height="26.5" viewBox="0 0 28 25" preserveAspectRatio="none"><path d="M4 3.500 L24 21.500" stroke="#3c4c90" stroke-width="2" stroke-dasharray="1.600 .500"/><rect x="1" y="0.8" width="5.2" height="5.2" fill="url(#gDG)" stroke="#0e6a0e" stroke-width=".600"/><rect x="21.3" y="19" width="5.2" height="5.2" fill="url(#gDG)" stroke="#0e6a0e" stroke-width=".600"/></svg>
<svg style="left:838.5px;top:214.0px" width="28" height="30" viewBox="0 0 28 28" preserveAspectRatio="none"><path d="M4 3.500 Q22 5 24 24" fill="none" stroke="#4a5a9a" stroke-width="2.200"/><rect x="0.5" y="0.8" width="5.2" height="5.2" fill="url(#gDG)" stroke="#0e6a0e" stroke-width=".600"/><rect x="22.3" y="22" width="5.2" height="5.2" fill="url(#gDG)" stroke="#0e6a0e" stroke-width=".600"/></svg>
<svg style="left:892.5px;top:214.0px" width="30" height="30" viewBox="0 0 30 28" preserveAspectRatio="none"><path d="M4 4 Q4 10 12 12 Q22 14 21 24" fill="none" stroke="#4a5a9a" stroke-width="2"/><path d="M4 4 V16 M21 24 Q22 16 27 14" fill="none" stroke="#9ab4e4" stroke-width="1.600"/><rect x="1.3" y="0.8" width="5.2" height="5.2" fill="url(#gDG)" stroke="#0e6a0e" stroke-width=".600"/><rect x="18.8" y="22.5" width="5.2" height="5.2" fill="url(#gDG)" stroke="#0e6a0e" stroke-width=".600"/><rect x="2.6" y="14.7" width="3.6" height="3.6" fill="url(#gDG)" stroke="#0e6a0e" stroke-width=".600"/><rect x="25.8" y="12" width="3.6" height="3.6" fill="url(#gDG)" stroke="#0e6a0e" stroke-width=".600"/></svg>
<svg style="left:947.5px;top:214.0px" width="30" height="30" viewBox="0 0 30 29" preserveAspectRatio="none"><path d="M4.500 3 V26 M25.500 3 V26" stroke="#7f9ad8" stroke-width="1.800"/><path d="M12 9 L17.500 14.500 L12 20Z" fill="#9db6e4" stroke="#8aa4dc" stroke-width=".800"/><rect x="2" y="0.8" width="4.8" height="4.8" fill="#8ed48e" stroke="#6cc06c" stroke-width=".600"/><rect x="23" y="0.8" width="4.8" height="4.8" fill="#8ed48e" stroke="#6cc06c" stroke-width=".600"/><rect x="2" y="23.6" width="4.8" height="4.8" fill="#8ed48e" stroke="#6cc06c" stroke-width=".600"/><rect x="23" y="23.6" width="4.8" height="4.8" fill="#8ed48e" stroke="#6cc06c" stroke-width=".600"/><rect x="23" y="12" width="4.8" height="4.8" fill="#8ed48e" stroke="#6cc06c" stroke-width=".600"/></svg>
<svg style="left:1001.0px;top:216.5px" width="36" height="27" viewBox="0 0 36 27"><path d="M4 7.500 H32" stroke="#8aa2dc" stroke-width="1.800"/><path d="M14 1.500 L22 18 M23 1.500 L15 18" stroke="#b4b4b4" stroke-width="2.400"/><rect x="10.500" y="17.500" width="5.500" height="7.500" rx="1.500" fill="#e8eefa" stroke="#8aa2d8" stroke-width="1.800"/><rect x="22" y="17" width="5.500" height="7.500" rx="1.500" fill="#e8eefa" stroke="#8aa2d8" stroke-width="1.800"/><rect x="1" y="5" width="4.8" height="4.8" fill="#8ed48e" stroke="#6cc06c" stroke-width=".600"/><rect x="30" y="5" width="4.8" height="4.8" fill="#8ed48e" stroke="#6cc06c" stroke-width=".600"/></svg>
<svg style="left:1102.0px;top:213.3px" width="36" height="30" viewBox="0 0 36 30"><path d="M6 19 L22 4 Q34 12 22 26" fill="none" stroke="#8ea6dc" stroke-width="2.400"/><rect x="18.500" y="1.500" width="6" height="6" fill="#ee7462"/><rect x="2" y="0.8" width="4.8" height="4.8" fill="#62c462" stroke="#48b048" stroke-width=".600"/><rect x="30" y="0.8" width="4.8" height="4.8" fill="#62c462" stroke="#48b048" stroke-width=".600"/><rect x="2" y="24.5" width="4.8" height="4.8" fill="#62c462" stroke="#48b048" stroke-width=".600"/><rect x="30" y="24.5" width="4.8" height="4.8" fill="#62c462" stroke="#48b048" stroke-width=".600"/><rect x="3.5" y="16.5" width="4" height="4" fill="#62c462" stroke="#48b048" stroke-width=".600"/><rect x="19" y="24.5" width="4" height="4" fill="#62c462" stroke="#48b048" stroke-width=".600"/></svg>
<svg style="left:1158.5px;top:213.3px" width="36" height="30" viewBox="0 0 36 30"><rect x="4.500" y="3.500" width="20" height="18" fill="#c5d8f4" stroke="#88a4dc" stroke-width="1.600"/><circle cx="24" cy="18.500" r="9" fill="#bcd0ee" stroke="#8ea6dc" stroke-width="1.600"/><path d="M15 9 H24.500 V18.500 H15Z" fill="#eef3fb"/><path d="M4 27 H30 M33 4 V26" stroke="#58b858" stroke-width="1.600" stroke-dasharray="2 2.500"/><rect x="1.5" y="0.8" width="4.8" height="4.8" fill="#62c462" stroke="#48b048" stroke-width=".600"/><rect x="30" y="0.8" width="4.8" height="4.8" fill="#62c462" stroke="#48b048" stroke-width=".600"/><rect x="1.5" y="24.5" width="4.8" height="4.8" fill="#62c462" stroke="#48b048" stroke-width=".600"/><rect x="30" y="24.5" width="4.8" height="4.8" fill="#62c462" stroke="#48b048" stroke-width=".600"/></svg>
<svg style="left:1214.5px;top:213.3px" width="36" height="30" viewBox="0 0 36 30"><rect x="4" y="3.500" width="17" height="16" fill="#c5d8f4" stroke="#88a4dc" stroke-width="1.600"/><circle cx="23" cy="19" r="8.500" fill="#c3d5f0" stroke="#8ea6dc" stroke-width="1.600"/><rect x="1.2" y="0.8" width="4.8" height="4.8" fill="#62c462" stroke="#48b048" stroke-width=".600"/><rect x="18" y="0.8" width="4.8" height="4.8" fill="#62c462" stroke="#48b048" stroke-width=".600"/><rect x="1.2" y="17" width="4.8" height="4.8" fill="#62c462" stroke="#48b048" stroke-width=".600"/><rect x="11.5" y="8.5" width="4.8" height="4.8" fill="#62c462" stroke="#48b048" stroke-width=".600"/><rect x="30" y="8.5" width="4.8" height="4.8" fill="#62c462" stroke="#48b048" stroke-width=".600"/><rect x="11.5" y="24.5" width="4.8" height="4.8" fill="#62c462" stroke="#48b048" stroke-width=".600"/><rect x="30" y="24.5" width="4.8" height="4.8" fill="#62c462" stroke="#48b048" stroke-width=".600"/></svg>
<svg style="left:1326.5px;top:214.5px" width="30" height="30" viewBox="0 0 30 30"><circle cx="11.500" cy="11" r="9.200" fill="#e6effa" stroke="#4f78c4" stroke-width="2.400"/><path d="M18.500 18 L28 27.500" stroke="#56628c" stroke-width="3.600" stroke-linecap="round"/></svg>
<svg style="left:1382.5px;top:213.0px" width="30" height="32" viewBox="0 0 30 32"><path d="M9 30 L3 19 Q1 15.500 4 15.500 Q6 15.500 8 19 V7 Q8 4.500 10 4.500 Q12 4.500 12 7 V5 Q12 2 14.200 2 Q16.400 2 16.400 5 V6.500 Q16.400 4 18.600 4 Q20.800 4 20.800 6.500 V9.500 Q20.800 7.500 22.800 7.500 Q25 7.500 25 10 V21 Q25 26 22.500 30 Z" fill="#dbe9fa" stroke="#2e5fb4" stroke-width="1.800" stroke-linejoin="round"/><path d="M12 7 V15 M16.400 6.500 V15 M20.800 9.500 V15.500" stroke="#2e5fb4" stroke-width="1.500"/></svg>
<svg style="left:1436.0px;top:213.5px" width="34" height="32" viewBox="0 0 34 32"><circle cx="17" cy="8" r="6.800" fill="#c6d8f2" stroke="#4f74bc" stroke-width="2"/><path d="M13.500 14 V19 H20.500 V14" fill="#b7cbea" stroke="#4f74bc" stroke-width="2"/><path d="M3 26 Q3 19.500 10 19.500 H24 Q31 19.500 31 26 Z" fill="#a9bfe4" stroke="#3f5fa8" stroke-width="2"/><rect x="2" y="26" width="30" height="4.500" fill="#cfcfcf" stroke="#41518a" stroke-width="1.600"/></svg>
<svg style="left:1490.0px;top:213.5px" width="30" height="30" viewBox="0 0 30 30"><path d="M3 27 L5 21 L17 9 L21 13 L9 25 Z" fill="#e4eefb" stroke="#3f6cc0" stroke-width="1.800" stroke-linejoin="round"/><path d="M15.500 6 L24 14.500" stroke="#3d4f94" stroke-width="3.400" stroke-linecap="round"/><path d="M19 10.500 L24.500 5" stroke="#3d4f94" stroke-width="5.500" stroke-linecap="round"/></svg>
<svg style="left:1608px;top:214.5px" width="34" height="34" viewBox="0 0 34 34"><circle cx="11.500" cy="11.500" r="10.300" fill="#dfe9f8" stroke="#6d8fd0" stroke-width="2.200"/><path d="M6.500 11.500 H16.500" stroke="#2f5cb0" stroke-width="3.200"/><path d="M19.500 19.500 L30.500 31" stroke="#23275a" stroke-width="3.600" stroke-linecap="round"/><path d="M19.500 19.500 L29.500 30" stroke="#c9cde0" stroke-width="1.200" stroke-dasharray="1.500 1.500"/></svg>
<svg style="left:1854px;top:214.5px" width="34" height="34" viewBox="0 0 34 34"><circle cx="11.500" cy="11.500" r="10.300" fill="#dfe9f8" stroke="#6d8fd0" stroke-width="2.200"/><path d="M6.500 11.500 H16.500" stroke="#2f5cb0" stroke-width="3.200"/><path d="M11.500 6.500 V16.500" stroke="#2f5cb0" stroke-width="3.200"/><path d="M19.500 19.500 L30.500 31" stroke="#23275a" stroke-width="3.600" stroke-linecap="round"/><path d="M19.500 19.500 L29.500 30" stroke="#c9cde0" stroke-width="1.200" stroke-dasharray="1.500 1.500"/></svg>
<div style="position:absolute;left:1658px;top:230px;width:182px;height:6px;border-radius:3px;background:#b9b9b9;"></div>
<div style="position:absolute;left:1658px;top:230px;width:26px;height:6px;border-radius:3px 0 0 3px;background:#3b8df3;"></div>
<div style="position:absolute;left:1674.6px;top:221.7px;width:22.6px;height:22.6px;border-radius:50%;background:#fff;box-shadow:0 0 1px rgba(0,0,0,.35),0 1px 1.500px rgba(0,0,0,.25);"></div>
<div style="position:absolute;left:0px;top:262px;width:460px;height:33px;background:linear-gradient(#f4f4f4 0,#f4f4f4 2.800px,#e1e1e1 4.200px,#ebebeb 40%,#f6f6f6 75%,#fbfbfb 100%);"></div>
<div style="position:absolute;left:0px;top:262px;width:59.5px;height:33px;background:linear-gradient(#b7d8f8 0,#b7d8f8 2.800px,#8dbdf1 3.600px,#93c3f4 40%,#b2e0fc 75%,#c0ecff 100%);border-right:1.500px solid #5f8fd0;"></div>
<div style="position:absolute;left:344px;top:262px;width:2px;height:33px;background:#9a9a9a;"></div>
<div style="position:absolute;left:403.5px;top:262px;width:56.5px;height:33px;background:linear-gradient(#b7d8f8 0,#b7d8f8 2.800px,#8dbdf1 3.600px,#93c3f4 40%,#b2e0fc 75%,#c0ecff 100%);border-left:1.500px solid #6f9ad4;"></div>
<div style="position:absolute;left:0px;top:294.5px;width:460px;height:2px;background:#9d9d9d;"></div>
<svg style="left:12px;top:266px" width="33" height="25" viewBox="0 0 33 25"><path d="M5 7.700 V21.300 H12 M5 13 H12" fill="none" stroke="#4f7cc4" stroke-width="1.800"/><rect x="1" y="1" width="8" height="5.700" fill="#fff" stroke="#2f55a8" stroke-width="2"/><rect x="12.700" y="10.900" width="6.400" height="4.200" fill="#fff" stroke="#2f55a8" stroke-width="1.900"/><rect x="12.700" y="18.800" width="6.400" height="4.400" fill="#fff" stroke="#24489c" stroke-width="1.900"/><rect x="12" y="2" width="20" height="3.700" fill="#4f86cf"/><rect x="22" y="12.100" width="10" height="3.700" fill="#5584c4"/><rect x="22" y="20.100" width="10" height="3.700" fill="#5b80b4"/></svg>
<svg style="left:362px;top:268px" width="21" height="23" viewBox="0 0 21 23"><rect x="1.0" y="1" width="6" height="3.800" fill="#fff" stroke="#2a4fa0" stroke-width="2"/><rect x="13.1" y="1" width="6" height="3.800" fill="#fff" stroke="#2a4fa0" stroke-width="2"/><rect x="1.0" y="9" width="6" height="3.800" fill="#fff" stroke="#2a4fa0" stroke-width="2"/><rect x="13.1" y="9" width="6" height="3.800" fill="#fff" stroke="#2a4fa0" stroke-width="2"/><rect x="1.0" y="17" width="6" height="3.800" fill="#fff" stroke="#2a4fa0" stroke-width="2"/><rect x="13.1" y="17" width="6" height="3.800" fill="#fff" stroke="#2a4fa0" stroke-width="2"/></svg>
<svg style="left:420.500px;top:266.200px" width="24" height="24" viewBox="0 0 24 24"><circle cx="10.500" cy="10.500" r="7" fill="none" stroke="#2a52a2" stroke-width="3.400"/><path d="M16 16 L21.500 21.500" stroke="#2a52a2" stroke-width="4" stroke-linecap="round"/></svg>
<div style="position:absolute;left:0px;top:296.5px;width:460px;height:62px;background:#a9a9a9;"></div>
<div style="position:absolute;left:37.2px;top:307.5px;width:379.4px;height:35px;background:#fff;border-radius:7px;border:1px solid #cfcfcf;"></div>
<svg style="left:157px;top:315px" width="22" height="22" viewBox="0 0 22 22"><circle cx="8.800" cy="8.800" r="7.400" fill="none" stroke="#4a4a4a" stroke-width="1.700"/><path d="M14.200 14.200 L20.800 20.800" stroke="#4a4a4a" stroke-width="1.900" stroke-linecap="round"/></svg>
<div class="t" style="left:190.6px;top:312.08px;font-size:22px;line-height:28.6px;color:#b9b9b9;letter-spacing:0.28px;-webkit-text-stroke:0.28px #b9b9b9;">Search</div>
<div style="position:absolute;left:0px;top:358px;width:460px;height:329.5px;background:#c2cfdc;overflow:hidden;"></div>
<div style="position:absolute;left:0px;top:434px;width:460px;height:37.5px;background:#dedede;"></div>
<div style="position:absolute;left:0;top:358px;width:460px;height:329.500px;overflow:hidden"><div class="t" style="left:34.5px;top:-2.12px;font-size:22px;line-height:28.6px;color:#000;letter-spacing:0.72px;-webkit-text-stroke:0.28px #000;">Network Security Diagrams</div><svg style="left:12.800px;top:5.6px" width="15.500" height="17" viewBox="0 0 15.500 17"><path d="M0 0 L15.500 8.500 L0 17Z" fill="#858585"/></svg><div class="t" style="left:34.5px;top:37.88px;font-size:22px;line-height:28.6px;color:#000;letter-spacing:0.72px;-webkit-text-stroke:0.28px #000;">Office Layout Plans</div><svg style="left:12.800px;top:45.6px" width="15.500" height="17" viewBox="0 0 15.500 17"><path d="M0 0 L15.500 8.500 L0 17Z" fill="#858585"/></svg><div class="t" style="left:34.5px;top:77.88px;font-size:22px;line-height:28.6px;color:#000;letter-spacing:0.72px;-webkit-text-stroke:0.28px #000;">Organizational Charts</div><svg style="left:11.300px;top:86.6px" width="17.400" height="15" viewBox="0 0 17.400 15"><path d="M0 0 H17.400 L8.700 15Z" fill="#858585"/></svg><div class="t" style="left:66.4px;top:117.88px;font-size:22px;line-height:28.6px;color:#000;letter-spacing:0.72px;-webkit-text-stroke:0.28px #000;">Organizational chart</div><div class="t" style="left:34.5px;top:157.88px;font-size:22px;line-height:28.6px;color:#000;letter-spacing:0.72px;-webkit-text-stroke:0.28px #000;">People</div><svg style="left:12.800px;top:165.6px" width="15.500" height="17" viewBox="0 0 15.500 17"><path d="M0 0 L15.500 8.500 L0 17Z" fill="#858585"/></svg><div class="t" style="left:34.5px;top:197.88px;font-size:22px;line-height:28.6px;color:#000;letter-spacing:0.72px;-webkit-text-stroke:0.28px #000;">Physics</div><svg style="left:12.800px;top:205.6px" width="15.500" height="17" viewBox="0 0 15.500 17"><path d="M0 0 L15.500 8.500 L0 17Z" fill="#858585"/></svg><div class="t" style="left:34.5px;top:237.88px;font-size:22px;line-height:28.6px;color:#000;letter-spacing:0.72px;-webkit-text-stroke:0.28px #000;">Pictorial Infographics</div><svg style="left:12.800px;top:245.6px" width="15.500" height="17" viewBox="0 0 15.500 17"><path d="M0 0 L15.500 8.500 L0 17Z" fill="#858585"/></svg><div class="t" style="left:34.5px;top:277.88px;font-size:22px;line-height:28.6px;color:#000;letter-spacing:0.72px;-webkit-text-stroke:0.28px #000;">Picture Graphs</div><svg style="left:12.800px;top:285.6px" width="15.500" height="17" viewBox="0 0 15.500 17"><path d="M0 0 L15.500 8.500 L0 17Z" fill="#858585"/></svg><div class="t" style="left:34.5px;top:317.88px;font-size:22px;line-height:28.6px;color:#000;letter-spacing:0.72px;-webkit-text-stroke:0.28px #000;">Pie Charts</div><svg style="left:12.800px;top:325.6px" width="15.500" height="17" viewBox="0 0 15.500 17"><path d="M0 0 L15.500 8.500 L0 17Z" fill="#858585"/></svg></div>
<div style="position:absolute;left:0px;top:687.5px;width:460px;height:45.5px;background:#a9a9a9;"></div>
<div style="position:absolute;left:31.7px;top:693.8px;width:386.3px;height:32.4px;background:#fff;border-radius:7px;box-shadow:0 1px 1.500px rgba(0,0,0,.3);"></div>
<div style="position:absolute;left:47.5px;top:699px;width:8.5px;height:6px;background:#3fa9f5;"></div>
<div style="position:absolute;left:47.5px;top:707px;width:8.5px;height:13.6px;background:#e8401c;"></div>
<div style="position:absolute;left:58px;top:699px;width:12.3px;height:13px;background:#7ac943;"></div>
<div style="position:absolute;left:58px;top:714.5px;width:12.3px;height:6px;background:#000;"></div>
<div class="t" style="left:81.2px;top:696.68px;font-size:22px;line-height:28.6px;color:#111;letter-spacing:0.41px;-webkit-text-stroke:0.28px #111;">Find More Shapes</div>
<div style="position:absolute;left:0px;top:733px;width:460px;height:34.5px;background:linear-gradient(#b4d6f8 0,#8cbcf1 2px,#92c2f4 35%,#aee0fc 70%,#bdeeff 100%);"></div>
<div class="t" style="left:43px;top:732.88px;font-size:24px;line-height:31.2px;color:#000;letter-spacing:0.6px;-webkit-text-stroke:0.28px #000;">Organizational chart</div>
<div style="position:absolute;left:422.8px;top:740.2px;width:21.8px;height:21.8px;border-radius:50%;background:#727476;"></div>
<svg style="left:428.200px;top:745.600px" width="11" height="11" viewBox="0 0 11 11"><path d="M1 1 L10 10 M10 1 L1 10" stroke="#a4cdf0" stroke-width="1.800" stroke-linecap="round"/></svg>
<div style="position:absolute;left:0px;top:767px;width:460px;height:3.5px;background:#9b9b9b;"></div>
<div style="position:absolute;left:0px;top:770.5px;width:460px;height:657.8px;background:#d0dce7;overflow:hidden;"><div class="ib" style="top:-57.500px"></div></div>
<div style="position:absolute;left:20.2px;top:1067px;width:75.5px;height:76px;background:#88b8ef;border-radius:7px;"></div>
<div class="ib" style="top:785px"><svg style="left:-2px;top:-2px" width="64" height="64" viewBox="0 0 64 64"><rect x="8" y="15.500" width="46" height="31" rx="10" fill="#3aa9e1"/><rect x="24" y="28" width="14" height="4" fill="#22789f"/></svg></div>
<div class="t" style="left:110px;top:788.88px;font-size:22px;line-height:28.6px;color:#000;">Assistant</div>
<div class="ib" style="top:857px"><svg style="left:-2px;top:-2px" width="64" height="64" viewBox="0 0 64 64"><rect x="8" y="15.500" width="46" height="31" rx="10" fill="#3aa9e1"/><rect x="24" y="22.500" width="14" height="4" fill="#22789f"/><rect x="24" y="36" width="14" height="4" fill="#22789f"/><rect x="14" y="30.500" width="34" height="1.300" fill="#fff"/><rect x="48.500" y="-.500" width="13.500" height="14.500" fill="#fff" stroke="#4a7fc0" stroke-width="1.600"/><path d="M51.500 5.500 L54.500 8.500 L59.500 3" fill="none" stroke="#3f86d8" stroke-width="1.600"/></svg></div>
<div class="t" style="left:110px;top:860.88px;font-size:22px;line-height:28.6px;color:#000;">Assistant, title</div>
<div class="ib" style="top:929px"><svg style="left:-2px;top:-2px" width="64" height="64" viewBox="0 0 64 64"><rect x="8" y="15.500" width="46" height="31" rx="10" fill="#3aa9e1"/><rect x="24" y="28" width="14" height="4" fill="#22789f"/></svg></div>
<div class="t" style="left:110px;top:932.88px;font-size:22px;line-height:28.6px;color:#000;">Stackable position</div>
<div class="ib" style="top:1001px"><svg style="left:-2px;top:-2px" width="64" height="64" viewBox="0 0 64 64"><rect x="8" y="15.500" width="46" height="31" rx="10" fill="#3aa9e1"/><rect x="24" y="22.500" width="14" height="4" fill="#22789f"/><rect x="24" y="36" width="14" height="4" fill="#22789f"/><rect x="14" y="30.500" width="34" height="1.300" fill="#fff"/><rect x="48.500" y="-.500" width="13.500" height="14.500" fill="#fff" stroke="#4a7fc0" stroke-width="1.600"/><path d="M51.500 5.500 L54.500 8.500 L59.500 3" fill="none" stroke="#3f86d8" stroke-width="1.600"/></svg></div>
<div class="t" style="left:110px;top:1004.88px;font-size:22px;line-height:28.6px;color:#000;">Stackable position, title</div>
<div class="ib" style="top:1073px"><svg style="left:-2px;top:-2px" width="64" height="64" viewBox="0 0 64 64"><rect x="8.500" y="16" width="45" height="29" rx="14.500" fill="#74d9ff" stroke="#2a9cd2" stroke-width="1.400" stroke-dasharray="3.200 2"/><rect x="24" y="28" width="14" height="4" fill="#3b8aa6"/></svg></div>
<div class="t" style="left:110px;top:1076.88px;font-size:22px;line-height:28.6px;color:#00309a;">Consultant</div>
<div class="ib" style="top:1145px"><svg style="left:-2px;top:-2px" width="64" height="64" viewBox="0 0 64 64"><rect x="8.500" y="16" width="45" height="29" rx="14.500" fill="#74d9ff" stroke="#2a9cd2" stroke-width="1.400" stroke-dasharray="3.200 2"/><rect x="24" y="22" width="14" height="4" fill="#3b8aa6"/><rect x="24" y="35.500" width="14" height="4" fill="#3b8aa6"/><path d="M10 30.500 H52" stroke="#2a9cd2" stroke-width="1.200" stroke-dasharray="3 2"/><rect x="48.500" y="-.500" width="13.500" height="14.500" fill="#fff" stroke="#4a7fc0" stroke-width="1.600"/><path d="M51.500 5.500 L54.500 8.500 L59.500 3" fill="none" stroke="#3f86d8" stroke-width="1.600"/></svg></div>
<div class="t" style="left:110px;top:1148.88px;font-size:22px;line-height:28.6px;color:#000;">Consultant, title</div>
<div class="ib" style="top:1217px"><svg style="left:-2px;top:-2px" width="64" height="64" viewBox="0 0 64 64"><defs><linearGradient id="gNote" x1="0" y1="0" x2="0" y2="1"><stop offset="0" stop-color="#dfeafc"/><stop offset="1" stop-color="#ffffff"/></linearGradient></defs><path d="M22.500 14 H50.500 L55 18.500 V35 H22.500Z" fill="#9a9a9a" opacity=".35"/><path d="M21.500 12.500 H49 L54.500 18 V34 H21.500Z" fill="url(#gNote)" stroke="#a9a9a9" stroke-width="1.600"/><path d="M49 12.500 V18 H54.500" fill="#fff" stroke="#a9a9a9" stroke-width="1.200"/><path d="M21.500 34 L9 46" stroke="#8a8aa0" stroke-width="1.500"/><rect x="5.500" y="43.500" width="5.500" height="5.500" fill="#ffb020" stroke="#f08a10" stroke-width="1"/></svg></div>
<div class="t" style="left:110px;top:1220.88px;font-size:22px;line-height:28.6px;color:#000;">Note</div>
<div class="ib" style="top:1289px"><svg style="left:-2px;top:-2px" width="64" height="64" viewBox="0 0 64 64"><rect x="10" y="9.500" width="41" height="38" rx="9" fill="none" stroke="#555" stroke-width="1.500" stroke-dasharray="3.400 2.400"/><path d="M19 9.500 H27 M23 6 V13 M35 9.500 H43 M39 6 V13" stroke="#555" stroke-width="1.500"/><rect x="18" y="8" width="10" height="3" fill="none"/></svg></div>
<div class="t" style="left:110px;top:1292.88px;font-size:22px;line-height:28.6px;color:#000;">Team</div>
<div class="ib" style="top:1361px"><svg style="left:-2px;top:-2px" width="64" height="64" viewBox="0 0 64 64"><path d="M9 30.500 H47" stroke="#1e78e6" stroke-width="1.700"/><path d="M46 27.800 L52 30.500 L46 33.200Z" fill="#1e78e6"/></svg></div>
<div class="t" style="left:110px;top:1364.88px;font-size:22px;line-height:28.6px;color:#000;">Direct connector</div>
<div style="position:absolute;left:460px;top:262px;width:2.8px;height:1166.5px;background:#8b8b8b;"></div>
<div style="position:absolute;left:498px;top:298px;width:2028px;height:1100px;background:#b1c1c1;"></div>
<div style="position:absolute;left:743px;top:304.8px;width:1538px;height:1087.7px;background:#fff;border:2px solid #000;"></div>
<div class="sh" style="left:875.6px;top:358.1px;height:39.8px;border-radius:19.9px;"><span>Executive Secretary</span></div>
<div class="sh" style="left:875.6px;top:405.6px;height:73.9px;border-radius:37.0px;"><span>Center for Faith-Based &amp;<br>Neighborhood<br>Partnerships (CFBNP)</span></div>
<div class="sh" style="left:875.6px;top:486.9px;height:81.4px;border-radius:40.7px;"><span>Office of the Ombudsman for the<br>Energy Employees<br>Occupational Illness<br>Compensation Program</span></div>
<div class="sh" style="left:875.6px;top:577.0px;height:55.4px;border-radius:27.7px;"><span>Office of the Public<br>Engagement</span></div>
<div class="sh" style="left:1515.6px;top:358.1px;height:39.8px;border-radius:19.9px;"><span>Executive Secretary</span></div>
<div class="sh" style="left:1515.6px;top:405.6px;height:73.9px;border-radius:37.0px;"><span>Center for Faith-Based &amp;<br>Neighborhood<br>Partnerships (CFBNP)</span></div>
<div class="sh" style="left:1515.6px;top:486.9px;height:81.4px;border-radius:40.7px;"><span>Office of the Ombudsman for the<br>Energy Employees<br>Occupational Illness<br>Compensation Program</span></div>
<div class="sh" style="left:1515.6px;top:577.0px;height:55.4px;border-radius:27.7px;"><span>Office of the Public<br>Engagement</span></div>
<div class="sh" style="left:1178.800px;top:434.300px;width:198.200px;height:100.100px;border-radius:50px;background:#4a4a78;font-size:15.100px;line-height:18.100px;letter-spacing:0"><span style="position:absolute;left:0;right:0;top:10px">Office of the Secretary<br>of Labor</span><span style="position:absolute;left:0;right:0;top:61.500px">Office of the Deputy<br>Secretary</span></div>
<div style="position:absolute;left:1226.7px;top:484.2px;width:102.8px;height:1.9px;background:#bcbed8;"></div>
<div class="sh" style="left:691.7px;top:895.1px;height:81.2px;border-radius:40.6px;"><span>Office of Concgressional<br>and International<br>Affair (OCIA)</span></div>
<div class="sh" style="left:957.8px;top:897.2px;height:81.2px;border-radius:40.6px;"><span>Office of the Assistant<br>Secretary for<br>Administartion and<br>Management</span></div>
<div class="sh" style="left:1223.4px;top:901.2px;height:81.2px;border-radius:40.6px;"><span>Office of the Chief<br>Financial Officer (OCFO)</span></div>
<div class="sh" style="left:1487.7px;top:897.2px;height:81.2px;border-radius:40.6px;"><span>Office of the Solicior<br>(Sol)</span></div>
<div class="sh" style="left:1753.5px;top:887.0px;height:81.2px;border-radius:40.6px;"><span>Office of Public Affairs</span></div>
<div class="sh" style="left:1985.7px;top:885.0px;height:81.2px;border-radius:40.6px;"><span>Office of the Assistant<br>Secretary for Policy<br>(OASP)</span></div>
<div class="sh" style="left:2217.6px;top:883.0px;height:81.2px;border-radius:40.6px;"><span>Employee Benefits<br>Security Administration</span></div>
<div class="sh" style="left:693.7px;top:1043.1px;height:81.2px;border-radius:40.6px;"><span>Employment and Training<br>Administration (ETA)</span></div>
<div class="sh" style="left:959.8px;top:1045.2px;height:81.2px;border-radius:40.6px;"><span>Women’s Burea</span></div>
<div class="sh" style="left:1225.4px;top:1049.2px;height:81.2px;border-radius:40.6px;"><span>Veterans’ Employment and<br>Training Service (Vets)</span></div>
<div class="sh" style="left:1489.7px;top:1045.2px;height:81.2px;border-radius:40.6px;"><span>Office of Federal Contract<br>Compliance Programs</span></div>
<div class="sh" style="left:1755.5px;top:1035.0px;height:81.2px;border-radius:40.6px;"><span>Office of Labor-<br>Management Standarts<br>(OLMS)</span></div>
<div class="sh" style="left:1987.7px;top:1033.0px;height:81.2px;border-radius:40.6px;"><span>Office of Workers’<br>Compensations Programs<br>(OWCP)</span></div>
<div class="sh" style="left:2219.6px;top:1031.0px;height:81.2px;border-radius:40.6px;"><span>Wage and Hour Division</span></div>
<div class="sh" style="left:701.7px;top:1215.1px;height:81.2px;border-radius:40.6px;"><span>Office of Disability<br>Employment Policy</span></div>
<div class="sh" style="left:967.8px;top:1217.2px;height:81.2px;border-radius:40.6px;"><span>Occupational Safety and<br>Health Administration</span></div>
<div class="sh" style="left:1233.4px;top:1221.2px;height:81.2px;border-radius:40.6px;"><span>Mine Safety and Health<br>Administration(MSHA)</span></div>
<div class="sh" style="left:1497.7px;top:1217.2px;height:81.2px;border-radius:40.6px;"><span>Bureau of Labor Statistics</span></div>
<div class="sh" style="left:1763.5px;top:1207.0px;height:81.2px;border-radius:40.6px;"><span>Bureau of International Labor<br>Affairs(ILAB)</span></div>
<div class="sh" style="left:1995.7px;top:1205.0px;height:81.2px;border-radius:40.6px;"><span>Office of Inspector<br>General (OIG)</span></div>
<div class="sh" style="left:2227.6px;top:1203.0px;height:81.2px;border-radius:40.6px;"><span>Pension Benefit Guaranty<br>Corporation</span></div>
<div style="position:absolute;left:498px;top:483px;width:2028px;height:2px;background:rgba(36,166,255,.86);"></div>
<div style="position:absolute;left:987.1px;top:298px;width:2px;height:1100px;background:rgba(36,166,255,.86);"></div>
<div style="position:absolute;left:497px;top:262px;width:2059px;height:35px;background:linear-gradient(#ffffff 0%,#f6f6f6 20%,#d9d9d9 56%,#b0b0b0 100%);"></div>
<svg style="left:497px;top:262px" width="2059" height="36" viewBox="0 0 2059 36"><rect x="0" y="34" width="2059" height="2" fill="#000"/><g stroke="#585858" stroke-width="2.100" fill="none"><path d="M6.9 24.5V36"/><path d="M14.2 24.5V36"/><path d="M21.5 24.5V36"/><path d="M28.8 12V36"/><path d="M36.1 24.5V36"/><path d="M43.4 24.5V36"/><path d="M50.7 24.5V36"/><path d="M58.1 24.5V36"/><path d="M65.4 18V36"/><path d="M72.7 24.5V36"/><path d="M80.0 24.5V36"/><path d="M87.3 24.5V36"/><path d="M94.6 24.5V36"/><path d="M101.9 12V36"/><path d="M109.2 24.5V36"/><path d="M116.6 24.5V36"/><path d="M123.9 24.5V36"/><path d="M131.2 24.5V36"/><path d="M138.5 18V36"/><path d="M145.8 24.5V36"/><path d="M153.1 24.5V36"/><path d="M160.4 24.5V36"/><path d="M167.8 24.5V36"/><path d="M175.1 12V36"/><path d="M182.4 24.5V36"/><path d="M189.7 24.5V36"/><path d="M197.0 24.5V36"/><path d="M204.3 24.5V36"/><path d="M211.6 18V36"/><path d="M218.9 24.5V36"/><path d="M226.3 24.5V36"/><path d="M233.6 24.5V36"/><path d="M240.9 24.5V36"/><path d="M248.2 12V36"/><path d="M255.5 24.5V36"/><path d="M262.8 24.5V36"/><path d="M270.1 24.5V36"/><path d="M277.5 24.5V36"/><path d="M284.8 18V36"/><path d="M292.1 24.5V36"/><path d="M299.4 24.5V36"/><path d="M306.7 24.5V36"/><path d="M314.0 24.5V36"/><path d="M321.3 12V36"/><path d="M328.6 24.5V36"/><path d="M336.0 24.5V36"/><path d="M343.3 24.5V36"/><path d="M350.6 24.5V36"/><path d="M357.9 18V36"/><path d="M365.2 24.5V36"/><path d="M372.5 24.5V36"/><path d="M379.8 24.5V36"/><path d="M387.2 24.5V36"/><path d="M394.5 12V36"/><path d="M401.8 24.5V36"/><path d="M409.1 24.5V36"/><path d="M416.4 24.5V36"/><path d="M423.7 24.5V36"/><path d="M431.0 18V36"/><path d="M438.3 24.5V36"/><path d="M445.7 24.5V36"/><path d="M453.0 24.5V36"/><path d="M460.3 24.5V36"/><path d="M467.6 12V36"/><path d="M474.9 24.5V36"/><path d="M482.2 24.5V36"/><path d="M489.5 24.5V36"/><path d="M496.9 24.5V36"/><path d="M504.2 18V36"/><path d="M511.5 24.5V36"/><path d="M518.8 24.5V36"/><path d="M526.1 24.5V36"/><path d="M533.4 24.5V36"/><path d="M540.7 12V36"/><path d="M548.0 24.5V36"/><path d="M555.4 24.5V36"/><path d="M562.7 24.5V36"/><path d="M570.0 24.5V36"/><path d="M577.3 18V36"/><path d="M584.6 24.5V36"/><path d="M591.9 24.5V36"/><path d="M599.2 24.5V36"/><path d="M606.6 24.5V36"/><path d="M613.9 12V36"/><path d="M621.2 24.5V36"/><path d="M628.5 24.5V36"/><path d="M635.8 24.5V36"/><path d="M643.1 24.5V36"/><path d="M650.4 18V36"/><path d="M657.8 24.5V36"/><path d="M665.1 24.5V36"/><path d="M672.4 24.5V36"/><path d="M679.7 24.5V36"/><path d="M687.0 12V36"/><path d="M694.3 24.5V36"/><path d="M701.6 24.5V36"/><path d="M708.9 24.5V36"/><path d="M716.3 24.5V36"/><path d="M723.6 18V36"/><path d="M730.9 24.5V36"/><path d="M738.2 24.5V36"/><path d="M745.5 24.5V36"/><path d="M752.8 24.5V36"/><path d="M760.1 12V36"/><path d="M767.5 24.5V36"/><path d="M774.8 24.5V36"/><path d="M782.1 24.5V36"/><path d="M789.4 24.5V36"/><path d="M796.7 18V36"/><path d="M804.0 24.5V36"/><path d="M811.3 24.5V36"/><path d="M818.6 24.5V36"/><path d="M826.0 24.5V36"/><path d="M833.3 12V36"/><path d="M840.6 24.5V36"/><path d="M847.9 24.5V36"/><path d="M855.2 24.5V36"/><path d="M862.5 24.5V36"/><path d="M869.8 18V36"/><path d="M877.2 24.5V36"/><path d="M884.5 24.5V36"/><path d="M891.8 24.5V36"/><path d="M899.1 24.5V36"/><path d="M906.4 12V36"/><path d="M913.7 24.5V36"/><path d="M921.0 24.5V36"/><path d="M928.3 24.5V36"/><path d="M935.7 24.5V36"/><path d="M943.0 18V36"/><path d="M950.3 24.5V36"/><path d="M957.6 24.5V36"/><path d="M964.9 24.5V36"/><path d="M972.2 24.5V36"/><path d="M979.5 12V36"/><path d="M986.9 24.5V36"/><path d="M994.2 24.5V36"/><path d="M1001.5 24.5V36"/><path d="M1008.8 24.5V36"/><path d="M1016.1 18V36"/><path d="M1023.4 24.5V36"/><path d="M1030.7 24.5V36"/><path d="M1038.0 24.5V36"/><path d="M1045.4 24.5V36"/><path d="M1052.7 12V36"/><path d="M1060.0 24.5V36"/><path d="M1067.3 24.5V36"/><path d="M1074.6 24.5V36"/><path d="M1081.9 24.5V36"/><path d="M1089.2 18V36"/><path d="M1096.6 24.5V36"/><path d="M1103.9 24.5V36"/><path d="M1111.2 24.5V36"/><path d="M1118.5 24.5V36"/><path d="M1125.8 12V36"/><path d="M1133.1 24.5V36"/><path d="M1140.4 24.5V36"/><path d="M1147.7 24.5V36"/><path d="M1155.1 24.5V36"/><path d="M1162.4 18V36"/><path d="M1169.7 24.5V36"/><path d="M1177.0 24.5V36"/><path d="M1184.3 24.5V36"/><path d="M1191.6 24.5V36"/><path d="M1198.9 12V36"/><path d="M1206.3 24.5V36"/><path d="M1213.6 24.5V36"/><path d="M1220.9 24.5V36"/><path d="M1228.2 24.5V36"/><path d="M1235.5 18V36"/><path d="M1242.8 24.5V36"/><path d="M1250.1 24.5V36"/><path d="M1257.4 24.5V36"/><path d="M1264.8 24.5V36"/><path d="M1272.1 12V36"/><path d="M1279.4 24.5V36"/><path d="M1286.7 24.5V36"/><path d="M1294.0 24.5V36"/><path d="M1301.3 24.5V36"/><path d="M1308.6 18V36"/><path d="M1316.0 24.5V36"/><path d="M1323.3 24.5V36"/><path d="M1330.6 24.5V36"/><path d="M1337.9 24.5V36"/><path d="M1345.2 12V36"/><path d="M1352.5 24.5V36"/><path d="M1359.8 24.5V36"/><path d="M1367.2 24.5V36"/><path d="M1374.5 24.5V36"/><path d="M1381.8 18V36"/><path d="M1389.1 24.5V36"/><path d="M1396.4 24.5V36"/><path d="M1403.7 24.5V36"/><path d="M1411.0 24.5V36"/><path d="M1418.3 12V36"/><path d="M1425.7 24.5V36"/><path d="M1433.0 24.5V36"/><path d="M1440.3 24.5V36"/><path d="M1447.6 24.5V36"/><path d="M1454.9 18V36"/><path d="M1462.2 24.5V36"/><path d="M1469.5 24.5V36"/><path d="M1476.9 24.5V36"/><path d="M1484.2 24.5V36"/><path d="M1491.5 12V36"/><path d="M1498.8 24.5V36"/><path d="M1506.1 24.5V36"/><path d="M1513.4 24.5V36"/><path d="M1520.7 24.5V36"/><path d="M1528.0 18V36"/><path d="M1535.4 24.5V36"/><path d="M1542.7 24.5V36"/><path d="M1550.0 24.5V36"/><path d="M1557.3 24.5V36"/><path d="M1564.6 12V36"/><path d="M1571.9 24.5V36"/><path d="M1579.2 24.5V36"/><path d="M1586.6 24.5V36"/><path d="M1593.9 24.5V36"/><path d="M1601.2 18V36"/><path d="M1608.5 24.5V36"/><path d="M1615.8 24.5V36"/><path d="M1623.1 24.5V36"/><path d="M1630.4 24.5V36"/><path d="M1637.7 12V36"/><path d="M1645.1 24.5V36"/><path d="M1652.4 24.5V36"/><path d="M1659.7 24.5V36"/><path d="M1667.0 24.5V36"/><path d="M1674.3 18V36"/><path d="M1681.6 24.5V36"/><path d="M1688.9 24.5V36"/><path d="M1696.3 24.5V36"/><path d="M1703.6 24.5V36"/><path d="M1710.9 12V36"/><path d="M1718.2 24.5V36"/><path d="M1725.5 24.5V36"/><path d="M1732.8 24.5V36"/><path d="M1740.1 24.5V36"/><path d="M1747.4 18V36"/><path d="M1754.8 24.5V36"/><path d="M1762.1 24.5V36"/><path d="M1769.4 24.5V36"/><path d="M1776.7 24.5V36"/><path d="M1784.0 12V36"/><path d="M1791.3 24.5V36"/><path d="M1798.6 24.5V36"/><path d="M1806.0 24.5V36"/><path d="M1813.3 24.5V36"/><path d="M1820.6 18V36"/><path d="M1827.9 24.5V36"/><path d="M1835.2 24.5V36"/><path d="M1842.5 24.5V36"/><path d="M1849.8 24.5V36"/><path d="M1857.1 12V36"/><path d="M1864.5 24.5V36"/><path d="M1871.8 24.5V36"/><path d="M1879.1 24.5V36"/><path d="M1886.4 24.5V36"/><path d="M1893.7 18V36"/><path d="M1901.0 24.5V36"/><path d="M1908.3 24.5V36"/><path d="M1915.7 24.5V36"/><path d="M1923.0 24.5V36"/><path d="M1930.3 12V36"/><path d="M1937.6 24.5V36"/><path d="M1944.9 24.5V36"/><path d="M1952.2 24.5V36"/><path d="M1959.5 24.5V36"/><path d="M1966.8 18V36"/><path d="M1974.2 24.5V36"/><path d="M1981.5 24.5V36"/><path d="M1988.8 24.5V36"/><path d="M1996.1 24.5V36"/><path d="M2003.4 12V36"/><path d="M2010.7 24.5V36"/><path d="M2018.0 24.5V36"/><path d="M2025.4 24.5V36"/><path d="M2032.7 24.5V36"/><path d="M2040.0 18V36"/><path d="M2047.3 24.5V36"/><path d="M2054.6 24.5V36"/></g><g font-family="Liberation Sans, sans-serif" font-size="17.600" fill="#5a5a5a" stroke="#5a5a5a" stroke-width=".350"><text x="32.7" y="20.600">-60</text><text x="105.8" y="20.600">-40</text><text x="179.0" y="20.600">-20</text><text x="252.1" y="20.600">0</text><text x="325.2" y="20.600">20</text><text x="398.4" y="20.600">40</text><text x="471.5" y="20.600">60</text><text x="544.6" y="20.600">80</text><text x="617.8" y="20.600">100</text><text x="690.9" y="20.600">120</text><text x="764.0" y="20.600">140</text><text x="837.2" y="20.600">160</text><text x="910.3" y="20.600">180</text><text x="983.4" y="20.600">200</text><text x="1056.6" y="20.600">220</text><text x="1129.7" y="20.600">240</text><text x="1202.8" y="20.600">260</text><text x="1276.0" y="20.600">280</text><text x="1349.1" y="20.600">300</text><text x="1422.2" y="20.600">320</text><text x="1495.4" y="20.600">340</text><text x="1568.5" y="20.600">360</text><text x="1641.6" y="20.600">380</text><text x="1714.8" y="20.600">400</text><text x="1787.9" y="20.600">420</text><text x="1861.0" y="20.600">440</text><text x="1934.2" y="20.600">460</text><text x="2007.3" y="20.600">480</text></g><path d="M1348 1V34" stroke="#ff1a1a" stroke-width="2.400"/></svg>
<div style="position:absolute;left:462.5px;top:262px;width:34.5px;height:33.5px;background:linear-gradient(#f7f7f7,#efefef);border:1.500px solid #cdcdcd;border-top-color:#e2e2e2;border-right:2px solid #b4b4b4;border-bottom:2px solid #b4b4b4;"></div>
<div class="t" style="left:468px;top:268.06px;font-size:18px;line-height:23.4px;color:#585858;transform:scaleX(.735);transform-origin:0 0;">mm</div>
<div style="position:absolute;left:462px;top:295px;width:35px;height:3px;background:#9d9d9d;"></div>
<div style="position:absolute;left:462px;top:298px;width:35px;height:1100.5px;background:linear-gradient(90deg,#ffffff 0%,#f6f6f6 20%,#d9d9d9 56%,#b0b0b0 100%);"></div>
<svg style="left:462px;top:298px;overflow:hidden" width="36" height="1100" viewBox="0 0 36 1100"><rect x="34" y="0" width="2" height="1100" fill="#000"/><g stroke="#585858" stroke-width="2.100" fill="none"><path d="M24.5 2.2H36"/><path d="M12 9.5H36"/><path d="M24.5 16.8H36"/><path d="M24.5 24.1H36"/><path d="M24.5 31.4H36"/><path d="M24.5 38.8H36"/><path d="M18 46.1H36"/><path d="M24.5 53.4H36"/><path d="M24.5 60.7H36"/><path d="M24.5 68.0H36"/><path d="M24.5 75.3H36"/><path d="M12 82.6H36"/><path d="M24.5 89.9H36"/><path d="M24.5 97.3H36"/><path d="M24.5 104.6H36"/><path d="M24.5 111.9H36"/><path d="M18 119.2H36"/><path d="M24.5 126.5H36"/><path d="M24.5 133.8H36"/><path d="M24.5 141.1H36"/><path d="M24.5 148.5H36"/><path d="M12 155.8H36"/><path d="M24.5 163.1H36"/><path d="M24.5 170.4H36"/><path d="M24.5 177.7H36"/><path d="M24.5 185.0H36"/><path d="M18 192.3H36"/><path d="M24.5 199.6H36"/><path d="M24.5 207.0H36"/><path d="M24.5 214.3H36"/><path d="M24.5 221.6H36"/><path d="M12 228.9H36"/><path d="M24.5 236.2H36"/><path d="M24.5 243.5H36"/><path d="M24.5 250.8H36"/><path d="M24.5 258.2H36"/><path d="M18 265.5H36"/><path d="M24.5 272.8H36"/><path d="M24.5 280.1H36"/><path d="M24.5 287.4H36"/><path d="M24.5 294.7H36"/><path d="M12 302.0H36"/><path d="M24.5 309.3H36"/><path d="M24.5 316.7H36"/><path d="M24.5 324.0H36"/><path d="M24.5 331.3H36"/><path d="M18 338.6H36"/><path d="M24.5 345.9H36"/><path d="M24.5 353.2H36"/><path d="M24.5 360.5H36"/><path d="M24.5 367.9H36"/><path d="M12 375.2H36"/><path d="M24.5 382.5H36"/><path d="M24.5 389.8H36"/><path d="M24.5 397.1H36"/><path d="M24.5 404.4H36"/><path d="M18 411.7H36"/><path d="M24.5 419.1H36"/><path d="M24.5 426.4H36"/><path d="M24.5 433.7H36"/><path d="M24.5 441.0H36"/><path d="M12 448.3H36"/><path d="M24.5 455.6H36"/><path d="M24.5 462.9H36"/><path d="M24.5 470.2H36"/><path d="M24.5 477.6H36"/><path d="M18 484.9H36"/><path d="M24.5 492.2H36"/><path d="M24.5 499.5H36"/><path d="M24.5 506.8H36"/><path d="M24.5 514.1H36"/><path d="M12 521.4H36"/><path d="M24.5 528.8H36"/><path d="M24.5 536.1H36"/><path d="M24.5 543.4H36"/><path d="M24.5 550.7H36"/><path d="M18 558.0H36"/><path d="M24.5 565.3H36"/><path d="M24.5 572.6H36"/><path d="M24.5 579.9H36"/><path d="M24.5 587.3H36"/><path d="M12 594.6H36"/><path d="M24.5 601.9H36"/><path d="M24.5 609.2H36"/><path d="M24.5 616.5H36"/><path d="M24.5 623.8H36"/><path d="M18 631.1H36"/><path d="M24.5 638.5H36"/><path d="M24.5 645.8H36"/><path d="M24.5 653.1H36"/><path d="M24.5 660.4H36"/><path d="M12 667.7H36"/><path d="M24.5 675.0H36"/><path d="M24.5 682.3H36"/><path d="M24.5 689.6H36"/><path d="M24.5 697.0H36"/><path d="M18 704.3H36"/><path d="M24.5 711.6H36"/><path d="M24.5 718.9H36"/><path d="M24.5 726.2H36"/><path d="M24.5 733.5H36"/><path d="M12 740.8H36"/><path d="M24.5 748.2H36"/><path d="M24.5 755.5H36"/><path d="M24.5 762.8H36"/><path d="M24.5 770.1H36"/><path d="M18 777.4H36"/><path d="M24.5 784.7H36"/><path d="M24.5 792.0H36"/><path d="M24.5 799.3H36"/><path d="M24.5 806.7H36"/><path d="M12 814.0H36"/><path d="M24.5 821.3H36"/><path d="M24.5 828.6H36"/><path d="M24.5 835.9H36"/><path d="M24.5 843.2H36"/><path d="M18 850.5H36"/><path d="M24.5 857.9H36"/><path d="M24.5 865.2H36"/><path d="M24.5 872.5H36"/><path d="M24.5 879.8H36"/><path d="M12 887.1H36"/><path d="M24.5 894.4H36"/><path d="M24.5 901.7H36"/><path d="M24.5 909.0H36"/><path d="M24.5 916.4H36"/><path d="M18 923.7H36"/><path d="M24.5 931.0H36"/><path d="M24.5 938.3H36"/><path d="M24.5 945.6H36"/><path d="M24.5 952.9H36"/><path d="M12 960.2H36"/><path d="M24.5 967.6H36"/><path d="M24.5 974.9H36"/><path d="M24.5 982.2H36"/><path d="M24.5 989.5H36"/><path d="M18 996.8H36"/><path d="M24.5 1004.1H36"/><path d="M24.5 1011.4H36"/><path d="M24.5 1018.7H36"/><path d="M24.5 1026.1H36"/><path d="M12 1033.4H36"/><path d="M24.5 1040.7H36"/><path d="M24.5 1048.0H36"/><path d="M24.5 1055.3H36"/><path d="M24.5 1062.6H36"/><path d="M18 1069.9H36"/><path d="M24.5 1077.3H36"/><path d="M24.5 1084.6H36"/><path d="M24.5 1091.9H36"/></g><g font-family="Liberation Sans, sans-serif" font-size="17.600" fill="#5a5a5a" stroke="#5a5a5a" stroke-width=".350"><text transform="translate(20.600 5.3) rotate(-90)">0</text><text transform="translate(20.600 78.4) rotate(-90)">20</text><text transform="translate(20.600 151.6) rotate(-90)">40</text><text transform="translate(20.600 224.7) rotate(-90)">60</text><text transform="translate(20.600 297.8) rotate(-90)">80</text><text transform="translate(20.600 371.0) rotate(-90)">100</text><text transform="translate(20.600 444.1) rotate(-90)">120</text><text transform="translate(20.600 517.2) rotate(-90)">140</text><text transform="translate(20.600 590.4) rotate(-90)">160</text><text transform="translate(20.600 663.5) rotate(-90)">180</text><text transform="translate(20.600 736.6) rotate(-90)">200</text><text transform="translate(20.600 809.8) rotate(-90)">220</text><text transform="translate(20.600 882.9) rotate(-90)">240</text><text transform="translate(20.600 956.0) rotate(-90)">260</text><text transform="translate(20.600 1029.2) rotate(-90)">280</text></g><path d="M1.500 397.500H34" stroke="#ff1a1a" stroke-width="2.400"/></svg>
<div style="position:absolute;left:2526px;top:298px;width:30px;height:1100px;background:#f6f6f6;border-left:1px solid #e6e6e6;"></div>
<div style="position:absolute;left:2534px;top:335.5px;width:15.8px;height:1056.5px;background:#c1c1c1;border-radius:8px;"></div>
<div style="position:absolute;left:2556px;top:262px;width:4px;height:1166px;background:#ececec;"></div>
<div style="position:absolute;left:462px;top:1398.5px;width:2098px;height:30px;background:#f7f7f7;border-top:1px solid #e2e2e2;"></div>
<div style="position:absolute;left:462px;top:1398.5px;width:35px;height:30px;background:linear-gradient(90deg,#fdfdfd,#e9e9e9);border-top:2px solid #b4b4b4;"></div>
<div style="position:absolute;left:476px;top:1406px;width:1.7px;height:15px;background:#777;"></div>
<div style="position:absolute;left:481.5px;top:1406px;width:1.7px;height:15px;background:#777;"></div>
<div style="position:absolute;left:496px;top:1398px;width:2px;height:30.5px;background:#000;"></div>
<div style="position:absolute;left:498px;top:1399px;width:90.5px;height:29px;background:#f5f5f5;border-right:1.500px solid #cfcfcf;border-bottom:1.500px solid #d4d4d4;"></div>
<div style="position:absolute;left:541px;top:1399px;width:1.5px;height:28px;background:#dddddd;"></div>
<svg style="left:512.500px;top:1405px" width="13" height="13" viewBox="0 0 13 13"><path d="M13 0 V13 L0 6.500Z" fill="#b6b6b6"/></svg>
<svg style="left:561.500px;top:1405px" width="13" height="13" viewBox="0 0 13 13"><path d="M0 0 V13 L13 6.500Z" fill="#b6b6b6"/></svg>
<div style="position:absolute;left:589.5px;top:1399px;width:189px;height:29px;background:#f8f8f8;border-bottom:1.500px solid #d4d4d4;"></div>
<div class="t" style="left:598.5px;top:1400.07px;font-size:21px;line-height:27.3px;color:#111;-webkit-text-stroke:0.28px #111;">Custom 41%</div>
<svg style="left:755px;top:1402px" width="17" height="26" viewBox="0 0 17 26"><path d="M2 9.500 L8.500 3 L15 9.500 M2 16.500 L8.500 23 L15 16.500" fill="none" stroke="#2a2a2a" stroke-width="2.200" stroke-linecap="round" stroke-linejoin="round"/></svg>
<div style="position:absolute;left:779.5px;top:1399.5px;width:89px;height:28.5px;background:linear-gradient(90deg,#9c9c9c,#a9a9a9 10%,#a9a9a9 90%,#8f8f8f);border:1px solid #9a9a9a;"></div>
<div style="position:absolute;left:794.8px;top:1405.7px;width:13.5px;height:17px;background:#fff;border:1.200px solid #8a8a8a;"></div>
<div style="position:absolute;left:817.5px;top:1405.7px;width:13.5px;height:17px;background:#fff;border:1.200px solid #8a8a8a;"></div>
<div style="position:absolute;left:839.8px;top:1405.7px;width:13.5px;height:17px;background:#fff;border:1.200px solid #8a8a8a;"></div>
<div style="position:absolute;left:876px;top:1406px;width:1574px;height:15.8px;background:#c1c1c1;border-radius:8px;"></div>
<svg style="left:2502.500px;top:1401px" width="28" height="24" viewBox="0 0 28 24"><rect x=".500" y=".500" width="27" height="23" fill="#f4f7fb" stroke="#bfbfbf"/><rect x="9" y="7" width="10" height="10" fill="#d2e1f5" stroke="#6f9bd6" stroke-width="1.600"/><path d="M14 1 V5 M11 3.500 h6 M14 23 V19 M11 20.500 h6 M1 12 H5 M3.500 9 v6 M27 12 H23 M24.500 9 v6" stroke="#2d5fb8" stroke-width="1.600"/><path d="M2 5 V2 H5 M23 2 H26 V5 M2 19 V22 H5 M23 22 H26 V19" fill="none" stroke="#6f9bd6" stroke-width="1.300"/></svg>
<svg style="left:2534px;top:1401px" width="22" height="24" viewBox="0 0 22 24"><rect x=".500" y=".500" width="21" height="23" fill="#eef2f8" stroke="#bfbfbf"/><rect x="8" y="5" width="7" height="13" fill="#fff" stroke="#b8c4d8" stroke-width="1.400"/><path d="M2 5 V2 H5 M17 2 H20 V5 M2 19 V22 H5 M17 22 H20 V19" fill="none" stroke="#2d5fb8" stroke-width="1.800"/></svg>
<div style="position:absolute;left:0px;top:1455px;width:140px;height:11px;background:linear-gradient(90deg,#114e28,#12422a 50px,#141a2c 130px);"></div>
<div style="position:absolute;left:0px;top:1428.3px;width:2560px;height:35.4px;background:linear-gradient(#e9e9e9,#eeeeee 30%,#ebebeb);border-top:1.500px solid #d6d6d6;border-radius:0 0 9px 9px;"></div>
<div class="t" style="left:18.9px;top:1428.87px;font-size:21px;line-height:27.3px;color:#111;letter-spacing:0.459px;-webkit-text-stroke:0.28px #111;">Ready</div>
<div class="t" style="left:1086.6px;top:1426.08px;font-size:24px;line-height:31.2px;color:#111;letter-spacing:0.45px;-webkit-text-stroke:0.28px #111;">M: [ 300.68, 106.06 ]</div>
</body></html>
